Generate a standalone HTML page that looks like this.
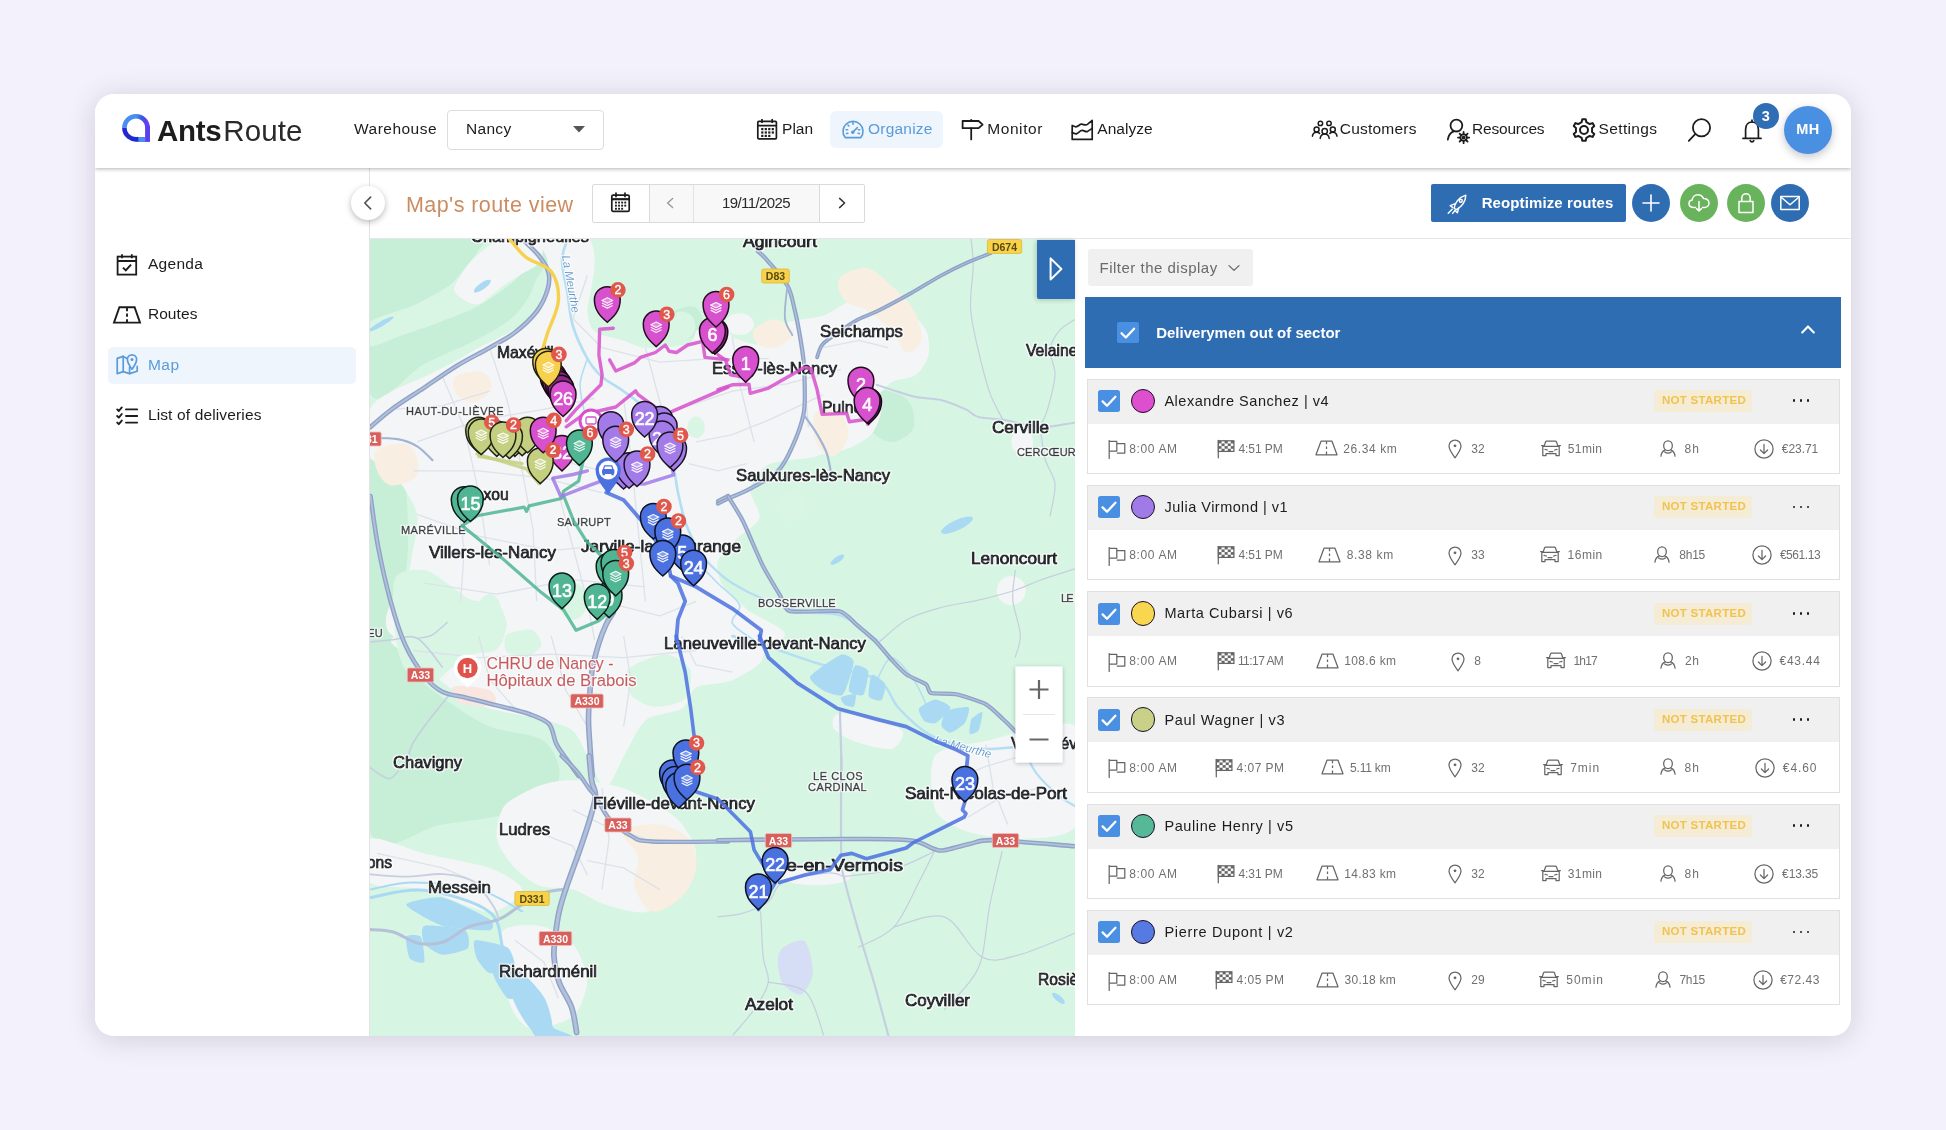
<!DOCTYPE html>
<html lang="en"><head><meta charset="utf-8"><title>AntsRoute - Map's route view</title>
<style>
*{box-sizing:border-box;margin:0;padding:0}
html,body{width:1946px;height:1130px;overflow:hidden}
body{background:#f3f1fb;font-family:"Liberation Sans",sans-serif;color:#1e1e1e;position:relative}
#card{position:absolute;left:95px;top:94px;width:1756px;height:942px;background:#fff;border-radius:19px;box-shadow:0 3px 28px rgba(60,55,85,.19);overflow:hidden}
#w{position:absolute;left:-95px;top:-94px;width:1946px;height:1130px;will-change:transform}
#w div,#w span{position:absolute}
#hdr{left:95px;top:94px;width:1756px;height:74px;background:#fff;box-shadow:0 1px 4px rgba(0,0,0,.3);z-index:5}
.t{white-space:nowrap;line-height:1}
.nav{font-size:15.5px;color:#1e1e1e}
svg{position:absolute;overflow:visible}
#side{left:95px;top:168px;width:275px;height:868px;border-right:1px solid #e3e3e3;background:#fff}
#toolbar{left:370px;top:168px;width:1481px;height:71px;border-bottom:1px solid #e6e6e6;background:#fff}
#map{left:370px;top:239px;width:705px;height:797px;overflow:hidden;background:#d6f5e2}
#panel{left:1075px;top:239px;width:776px;height:797px;background:#fff}
.drv{left:1087px;width:753px;height:96px;border:1px solid #e2e2e2;background:#fff}
.drvtop{left:1088px;width:751px;height:44px;background:#f0f0f0}
.cb{width:22px;height:22px;border-radius:2.5px;background:#4a90e2}
.dot{width:25px;height:25px;border-radius:50%;border:1.6px solid #1a1020}
.name{font-size:15.5px;color:#1e1e1e}
.ns{font-size:11.5px;font-weight:bold;color:#f3c04a}
.nsb{background:#f7ecd2;border-radius:3px}
.st{font-size:13px;color:#777}
.d3{width:3.4px;height:3.4px;border-radius:50%;background:#222}
</style></head><body>
<div id="card"><div id="w">
<div id="hdr"></div>
<div style="left:0;top:0;width:1946px;height:1130px;z-index:6">
<svg style="left:120px;top:112px" width="32" height="32" viewBox="0 0 32 32" ><defs><linearGradient id="lg1" x1="0" y1="0" x2="1" y2="0"><stop offset="0" stop-color="#4a8ff0"/><stop offset=".55" stop-color="#3b55e6"/><stop offset="1" stop-color="#6a3df0"/></linearGradient><linearGradient id="lg2" x1="0" y1="0" x2="1" y2="1"><stop offset="0" stop-color="#3a5ce8"/><stop offset="1" stop-color="#1c22cc"/></linearGradient></defs>
<path d="M16 4.2A11.6 11.6 0 0 1 27.6 15.8V27.4H16" fill="none" stroke="url(#lg1)" stroke-width="4.6"/>
<path d="M4.4 15.8A11.6 11.6 0 0 1 16 4.2" fill="none" stroke="#4a8ff0" stroke-width="4.6"/>
<path d="M4.4 15.8A11.6 11.6 0 0 0 18.5 27.1" fill="none" stroke="#2128d2" stroke-width="4.6"/>
<path d="M18.5 27.4H29.9" fill="none" stroke="#4d8df2" stroke-width="4.6"/>
<path d="M27.6 14V29.7" fill="none" stroke="#5a3ff0" stroke-width="4.6"/></svg>
<span class="t" style="left:157.0px;top:116.2px;font-size:29.5px;color:#1d1d1d;letter-spacing:-0.26px;font-weight:bold;">Ants</span>
<span class="t" style="left:223.3px;top:116.2px;font-size:29.5px;color:#2a2a2a;letter-spacing:0.10px;">Route</span>
<span class="t" style="left:354.0px;top:121.1px;font-size:15.5px;color:#1c1c1c;letter-spacing:0.48px;">Warehouse</span>
<div style="left:447px;top:109.5px;width:157px;height:40.5px;border:1px solid #dcdcdc;border-radius:4px;background:#fff"></div>
<span class="t" style="left:466.0px;top:121.1px;font-size:15.5px;color:#1c1c1c;letter-spacing:0.31px;">Nancy</span>
<svg style="left:572px;top:125px" width="14" height="8" viewBox="0 0 14 8" ><path d="M1 1H13L7 7.4Z" fill="#555"/></svg>
<svg style="left:756px;top:118px" width="22" height="22" viewBox="0 0 22 22" ><g fill="none" stroke="#1c1c1c" stroke-width="1.7"><rect x="1.8" y="3.4" width="18.6" height="17.4" rx="1"/><path d="M1.8 7.6H20.4M6 1V5M16.2 1V5"/></g>
<g fill="#1c1c1c"><rect x="5.2" y="10" width="2.2" height="2.2"/><rect x="8.7" y="10" width="2.2" height="2.2"/><rect x="12.2" y="10" width="2.2" height="2.2"/><rect x="15.7" y="10" width="2.2" height="2.2"/><rect x="5.2" y="13.4" width="2.2" height="2.2"/><rect x="8.7" y="13.4" width="2.2" height="2.2"/><rect x="12.2" y="13.4" width="2.2" height="2.2"/><rect x="15.7" y="13.4" width="2.2" height="2.2"/><rect x="5.2" y="16.8" width="2.2" height="2.2"/><rect x="8.7" y="16.8" width="2.2" height="2.2"/><rect x="12.2" y="16.8" width="2.2" height="2.2"/></g></svg>
<span class="t" style="left:782.0px;top:121.2px;font-size:15.5px;color:#1c1c1c;letter-spacing:0.04px;">Plan</span>
<div style="left:829.5px;top:110.5px;width:113px;height:37.5px;background:#eef5fd;border-radius:6px"></div>
<svg style="left:842px;top:119px" width="22" height="20" viewBox="0 0 22 20" ><g fill="none" stroke="#5a9bdc" stroke-width="1.6" stroke-linecap="round"><path d="M3.2 18.6A10 10 0 1 1 18.8 18.6Z" stroke-linejoin="round"/><path d="M11 13L15.4 8.6"/><path d="M11 3.8V5.2M4.2 10.8H5.6M16.4 10.8H17.8M5.9 6L6.9 7M4.6 14.6L5.8 14.2M17.4 14.6L16.2 14.2"/></g><circle cx="10.8" cy="13.2" r="1.7" fill="#5a9bdc"/></svg>
<span class="t" style="left:868.0px;top:121.2px;font-size:15.5px;color:#5a9bdc;letter-spacing:0.21px;">Organize</span>
<svg style="left:961px;top:118px" width="23" height="22" viewBox="0 0 23 22" ><g fill="none" stroke="#1c1c1c" stroke-width="1.8" stroke-linejoin="round"><path d="M1.6 3H17.6L21.6 6.6L17.6 10.2H1.6Z"/><path d="M10.2 10.2V21.4" stroke-linecap="round"/><path d="M10.2 1.2V3"/></g></svg>
<span class="t" style="left:987.2px;top:121.2px;font-size:15.5px;color:#1c1c1c;letter-spacing:0.59px;">Monitor</span>
<svg style="left:1070px;top:118px" width="24" height="23" viewBox="0 0 24 23" ><g fill="none" stroke="#1c1c1c" stroke-width="1.7" stroke-linejoin="round" stroke-linecap="round"><path d="M2.2 7.4V21.4H22.2V2.4L17.4 6.4C15.4 7.9 13.6 6.2 11.6 6.2C9.4 6.2 8.2 8.8 6 8.8C4.6 8.8 3.4 8 2.2 7.4Z"/><path d="M2.2 14.6C4 15.6 5.4 16.2 6.8 15.6C9 14.6 10 12.2 12.4 12.4C14.6 12.6 15.6 14.4 17.6 13.4L22.2 10.4"/></g></svg>
<span class="t" style="left:1097.3px;top:121.2px;font-size:15.5px;color:#1c1c1c;letter-spacing:0.02px;">Analyze</span>
<svg style="left:1311px;top:119px" width="28" height="21" viewBox="0 0 28 21" ><g fill="none" stroke="#1c1c1c" stroke-width="1.5" stroke-linecap="round"><circle cx="9.4" cy="4.4" r="2.2"/><circle cx="18" cy="4.4" r="2.2"/><circle cx="5.6" cy="10.6" r="2.5"/><circle cx="13.7" cy="12.2" r="2.7"/><circle cx="21.8" cy="10.6" r="2.5"/><path d="M1.4 17.2C1.8 14.6 3.4 13.2 5.6 13.2C6.8 13.2 7.8 13.6 8.6 14.4"/><path d="M26 17.2C25.6 14.6 24 13.2 21.8 13.2C20.6 13.2 19.6 13.6 18.8 14.4"/><path d="M9.2 19.4C9.6 16.6 11.3 15 13.7 15C16.1 15 17.8 16.6 18.2 19.4"/></g></svg>
<span class="t" style="left:1339.8px;top:120.6px;font-size:15.5px;color:#1c1c1c;letter-spacing:0.21px;">Customers</span>
<svg style="left:1446px;top:118px" width="27" height="28" viewBox="0 0 27 28" ><g fill="none" stroke="#1c1c1c" stroke-width="1.800" stroke-linecap="round"><circle cx="10.400" cy="7.600" r="5.900"/><path d="M1.800 21.600C2.400 17.400 4.600 14.600 7.800 13.400"/><circle cx="17.6" cy="19.6" r="3.2"/><circle cx="17.6" cy="19.6" r="1" /><path d="M17.6 14V16.2M17.6 23V25.2M12 19.6H14.2M21 19.6H23.2M13.6 15.6L15.2 17.2M20 22L21.6 23.6M21.6 15.6L20 17.2M15.2 22L13.6 23.6"/></g></svg>
<span class="t" style="left:1472.0px;top:120.6px;font-size:15.5px;color:#1c1c1c;letter-spacing:-0.19px;">Resources</span>
<svg style="left:1571.8px;top:117.5px" width="24" height="24" viewBox="0 0 24 24" ><g fill="none" stroke="#1c1c1c" stroke-width="2" stroke-linejoin="round"><path d="M10.28 1.14L13.72 1.14L14.32 4.03L17.74 6.01L20.55 5.08L22.27 8.06L20.06 10.02L20.06 13.98L22.27 15.94L20.55 18.92L17.74 17.99L14.32 19.97L13.72 22.86L10.28 22.86L9.68 19.97L6.26 17.99L3.45 18.92L1.73 15.94L3.94 13.98L3.94 10.02L1.73 8.06L3.45 5.08L6.26 6.01L9.68 4.03Z"/><circle cx="12" cy="12" r="4"/></g></svg>
<span class="t" style="left:1598.5px;top:120.6px;font-size:15.5px;color:#1c1c1c;letter-spacing:0.37px;">Settings</span>
<svg style="left:1686px;top:116px" width="28" height="28" viewBox="0 0 28 28" ><g fill="none" stroke="#1c1c1c" stroke-width="1.8" stroke-linecap="round"><circle cx="15.5" cy="11.8" r="8.6"/><path d="M9.2 18.2L2.8 24.8"/></g></svg>
<svg style="left:1741px;top:118px" width="22" height="26" viewBox="0 0 22 26" ><g fill="none" stroke="#1c1c1c" stroke-width="1.7" stroke-linecap="round" stroke-linejoin="round"><path d="M2 20.4H20M4.6 20.4V11.4C4.6 6.8 7.2 4 11 4C14.8 4 17.4 6.8 17.4 11.4V20.4"/><path d="M11 4V2.2"/><path d="M9.2 22.6A1.9 1.9 0 0 0 12.8 22.6"/></g></svg>
<div style="left:1753.3px;top:103.3px;width:26px;height:26px;border-radius:50%;background:#2f6db5"></div>
<span class="t" style="left:1761.8px;top:109.0px;font-size:14.5px;color:#fff;font-weight:bold;">3</span>
<div style="left:1784px;top:105.7px;width:48px;height:48px;border-radius:50%;background:#4a90e2;box-shadow:0 3px 9px rgba(60,60,90,.3)"></div>
<span class="t" style="left:1796.3px;top:122.4px;font-size:14.5px;color:#fff;letter-spacing:0.47px;font-weight:bold;">MH</span>
</div>
<div id="side"></div>
<svg style="left:115px;top:253px" width="24" height="24" viewBox="0 0 24 24" ><g fill="none" stroke="#1c1c1c" stroke-width="1.8"><rect x="2.6" y="3.6" width="18.6" height="18" /><path d="M2.6 8H21.2M7 1.2V5.2M16.8 1.2V5.2"/><path d="M8 14.6L10.8 17.4L16 11.6" stroke-width="2"/></g></svg>
<span class="t" style="left:147.9px;top:256.2px;font-size:15.5px;color:#1c1c1c;letter-spacing:0.31px;">Agenda</span>
<svg style="left:112px;top:305px" width="30" height="20" viewBox="0 0 30 20" ><g fill="none" stroke="#1c1c1c" stroke-width="1.9" stroke-linejoin="miter"><path d="M7.4 2.2H22.6L28 17.6H2Z"/><path d="M15 2.2V6.2M15 8.6V11.8M15 14.2V17.6"/></g></svg>
<span class="t" style="left:147.9px;top:306.4px;font-size:15.5px;color:#1c1c1c;letter-spacing:0.08px;">Routes</span>
<div style="left:107.5px;top:346.7px;width:248.7px;height:37.2px;background:#eef5fd;border-radius:5px"></div>
<svg style="left:115px;top:352px" width="25" height="24" viewBox="0 0 25 24" ><g fill="none" stroke="#5a9bdc" stroke-width="1.7" stroke-linejoin="round" stroke-linecap="round"><path d="M8.2 4.4L2.2 6.4V21.6L8.2 19.6L14.6 21.6L22.2 19.2V14.4"/><path d="M8.2 4.4V19.6"/><path d="M12 6.4L8.2 4.4"/><path d="M17 17.2C14.4 13.6 12.4 10.6 12.4 7.4A4.6 4.6 0 0 1 21.6 7.400C21.600 10.600 19.600 13.600 17.000 17.200Z"/><path d="M14.6 21.6V15.6"/></g><circle cx="17" cy="7.4" r="1.5" fill="#5a9bdc"/></svg>
<span class="t" style="left:147.9px;top:356.8px;font-size:15.5px;color:#5a9bdc;letter-spacing:0.48px;">Map</span>
<svg style="left:115px;top:405px" width="25" height="22" viewBox="0 0 25 22" ><g fill="none" stroke="#1c1c1c" stroke-width="1.9" stroke-linecap="round" stroke-linejoin="round"><path d="M11 4.4H22.2M11 11H22.2M11 17.600H22.2"/><path d="M2.2 4.4L3.8 6L6.8 2.4M2.2 11L3.8 12.6L6.8 9M2.2 17.6L3.8 19.2L6.8 15.6"/></g></svg>
<span class="t" style="left:147.9px;top:406.6px;font-size:15.5px;color:#1c1c1c;letter-spacing:0.14px;">List of deliveries</span>
<div id="toolbar"></div>
<div style="left:351px;top:186px;width:34px;height:34px;border-radius:50%;background:#fff;box-shadow:0 2px 6px rgba(0,0,0,.28);z-index:4"></div>
<svg style="z-index:4;left:361px;top:195px" width="14" height="16" viewBox="0 0 14 16" ><path d="M9.6 2.2L3.8 8L9.6 13.8" fill="none" stroke="#555" stroke-width="1.7" stroke-linecap="round" stroke-linejoin="round"/></svg>
<span class="t" style="left:406.0px;top:194.9px;font-size:21.5px;color:#cc8b60;letter-spacing:0.43px;">Map's route view</span>
<div style="left:592px;top:183.5px;width:272.5px;height:39px;border:1px solid #dadada;border-radius:2px;background:#fff"></div>
<div style="left:649px;top:184.5px;width:170.5px;height:37px;background:#f8f8f8;border-left:1px solid #dadada;border-right:1px solid #dadada"></div>
<div style="left:692.5px;top:184.5px;width:1px;height:37px;background:#e2e2e2"></div>
<svg style="left:610px;top:192px" width="21" height="21" viewBox="0 0 21 21" ><g fill="none" stroke="#1c1c1c" stroke-width="1.7"><rect x="1.8" y="3.2" width="17.4" height="16.2" rx="1.4"/><path d="M1.8 7.2H19.2" stroke-width="2.2"/><path d="M6 1V4.600M15 1V4.600" stroke-linecap="round"/></g><g fill="#1c1c1c"><rect x="5" y="9.6" width="1.9" height="1.9"/><rect x="8.1" y="9.6" width="1.9" height="1.9"/><rect x="11.2" y="9.6" width="1.9" height="1.9"/><rect x="14.300" y="9.6" width="1.9" height="1.9"/><rect x="5" y="12.7" width="1.9" height="1.9"/><rect x="8.1" y="12.7" width="1.9" height="1.9"/><rect x="11.2" y="12.7" width="1.9" height="1.9"/><rect x="14.3" y="12.7" width="1.9" height="1.9"/><rect x="5" y="15.8" width="1.9" height="1.9"/><rect x="8.1" y="15.8" width="1.9" height="1.9"/><rect x="11.2" y="15.8" width="1.9" height="1.9"/></g></svg>
<svg style="left:664px;top:196px" width="12" height="14" viewBox="0 0 12 14" ><path d="M8.6 2.4L3.6 7L8.6 11.6" fill="none" stroke="#999" stroke-width="1.4" stroke-linecap="round" stroke-linejoin="round"/></svg>
<span class="t" style="left:722.0px;top:195.2px;font-size:15px;color:#2a2a2a;letter-spacing:-0.60px;">19/11/2025</span>
<svg style="left:836px;top:196px" width="12" height="14" viewBox="0 0 12 14" ><path d="M3.6 2.400L8.6 7L3.6 11.6" fill="none" stroke="#333" stroke-width="1.5" stroke-linecap="round" stroke-linejoin="round"/></svg>
<div style="left:1431px;top:184px;width:195px;height:38px;background:#2f6db3;border-radius:2px"></div>
<svg style="left:1446px;top:193px" width="22" height="22" viewBox="0 0 22 22" ><g fill="none" stroke="#fff" stroke-width="1.4" stroke-linejoin="round" stroke-linecap="round"><path d="M8.2 15.4C8.6 10.4 12.4 4.4 19.8 2.2C19.6 8.6 15.2 13.8 10.6 16.600Z"/><path d="M9.4 10.6L4.2 12.6L6.8 14.6"/><path d="M12.6 15.2L11.4 19.8L8.8 17.2"/><path d="M6.2 16.2L2.2 20.2M8.6 18L6.6 20.4"/><circle cx="14.800" cy="7.800" r="1.5"/></g></svg>
<span class="t" style="left:1481.7px;top:195.0px;font-size:15px;color:#fff;letter-spacing:0.10px;font-weight:bold;">Reoptimize routes</span>
<div style="left:1632.4px;top:184px;width:38px;height:38px;background:#2f6db3;border-radius:50%"></div>
<div style="left:1679.6px;top:184px;width:38px;height:38px;background:#6ab35d;border-radius:50%"></div>
<div style="left:1726.6px;top:184px;width:38px;height:38px;background:#6ab35d;border-radius:50%"></div>
<div style="left:1771.2px;top:184px;width:38px;height:38px;background:#2f6db3;border-radius:50%"></div>
<svg style="left:1641.4px;top:193px" width="20" height="20" viewBox="0 0 20 20" ><path d="M10 2V18M2 10H18" stroke="#fff" stroke-width="1.6" fill="none" stroke-linecap="round"/></svg>
<svg style="left:1686.6px;top:191px" width="24" height="24" viewBox="0 0 24 24" ><g fill="none" stroke="#fff" stroke-width="1.5" stroke-linecap="round" stroke-linejoin="round"><path d="M8.4 16.4H6.400C3.800 16.400 2 14.800 2 12.600C2 10.600 3.400 9.200 5.200 9C5.400 6 7.800 3.800 10.800 3.800C13.400 3.800 15.400 5.200 16.400 7.400C19.400 7.200 22 9.200 22 12C22 14.600 20 16.400 17.600 16.400H15.600"/><path d="M12 10.400V19.800M9.600 17.600L12 20L14.400 17.600"/></g></svg>
<svg style="left:1735.6px;top:191px" width="20" height="24" viewBox="0 0 20 24" ><g fill="none" stroke="#fff" stroke-width="1.5" stroke-linejoin="round"><rect x="3" y="10.400" width="14" height="11"/><path d="M5.800 10.400V7A4.200 4.200 0 0 1 14.200 7V10.400"/></g></svg>
<svg style="left:1779.2px;top:195px" width="22" height="16" viewBox="0 0 22 16" ><g fill="none" stroke="#fff" stroke-width="1.5" stroke-linejoin="round"><rect x="1.800" y="1.600" width="18.400" height="12.800"/><path d="M2.200 2.200L11 9.800L19.800 2.200"/></g></svg>
<div id="map"><svg style="left:0;top:0" width="705" height="797" viewBox="370 239 705 797" font-family="Liberation Sans, sans-serif"><defs><filter id="halo" x="-2%" y="-2%" width="104%" height="104%"><feMorphology in="SourceAlpha" operator="dilate" radius="1.200" result="d"/><feGaussianBlur in="d" stdDeviation=".500" result="b"/><feFlood flood-color="#fff" flood-opacity=".850"/><feComposite in2="b" operator="in" result="h"/><feMerge><feMergeNode in="h"/><feMergeNode in="SourceGraphic"/></feMerge></filter><filter id="zs" x="-20%" y="-10%" width="140%" height="125%"><feDropShadow dx="0" dy="1" stdDeviation="2" flood-color="#000" flood-opacity=".25"/></filter></defs><path d="M370.0 239.0C398.4 213.3 512.8 231.8 540.3 239.0C567.8 246.2 539.1 269.8 534.9 282.5C530.6 295.2 524.3 305.7 514.9 315.1C505.6 324.4 493.8 330.5 478.7 338.6C463.6 346.8 442.5 354.9 424.3 364.0C406.2 373.1 379.1 413.8 370.0 393.0C360.9 372.2 341.6 264.7 370.0 239.0Z" fill="#c7eed6" stroke="none" stroke-width="1" />
<path d="M370.0 461.8C375.1 433.6 394.5 459.7 400.8 470.9C407.1 482.1 407.4 510.1 408.0 528.9C408.6 547.6 407.1 564.7 404.4 583.2C401.7 601.7 397.5 630.6 391.7 640.1C386.0 649.6 373.6 669.8 370.0 640.1C366.4 610.4 364.9 490.0 370.0 461.8Z" fill="#c7eed6" stroke="none" stroke-width="1" />
<path d="M370.0 636.0C373.6 603.4 384.5 630.0 391.7 636.0C399.0 642.0 405.0 662.0 413.5 672.2C421.9 682.5 429.8 688.5 442.5 697.6C455.1 706.7 472.7 719.3 489.6 726.6C506.5 733.8 532.4 732.0 543.9 741.1C555.4 750.1 562.0 769.5 558.4 780.9C554.8 792.4 541.5 802.7 522.2 809.9C502.9 817.2 467.8 820.8 442.5 824.4C417.1 828.0 382.1 863.1 370.0 831.7C357.9 800.3 366.4 668.6 370.0 636.0Z" fill="#c7eed6" stroke="none" stroke-width="1" />
<path d="M870.0 391.2C876.0 386.3 899.0 392.4 906.2 398.4C913.5 404.5 915.9 420.2 913.5 427.4C911.1 434.7 899.0 441.9 891.7 441.9C884.5 441.9 873.6 435.9 870.0 427.4C866.4 419.0 864.0 396.0 870.0 391.2Z" fill="#c7eed6" stroke="none" stroke-width="1" />
<path d="M674.3 311.5C678.6 307.8 691.3 304.8 696.1 307.8C700.9 310.9 705.7 324.1 703.3 329.6C700.9 335.0 687.0 340.4 681.6 340.4C676.2 340.4 671.9 334.4 670.7 329.6C669.5 324.7 670.1 315.1 674.3 311.5Z" fill="#c7eed6" stroke="none" stroke-width="1" />
<path d="M370.0 322.0C375.6 316.7 401.3 310.9 412.0 306.0C422.7 301.1 442.3 290.9 450.0 285.0C457.7 279.1 464.7 268.0 470.0 262.0C475.3 256.0 482.0 242.9 490.0 240.0C498.0 237.1 526.0 235.3 530.0 240.0C534.0 244.7 526.7 266.3 520.0 275.0C513.3 283.7 490.7 298.7 480.0 305.0C469.3 311.3 450.7 317.9 440.0 322.0C429.3 326.1 409.3 332.8 400.0 336.0C390.7 339.2 374.0 347.9 370.0 346.0C366.0 344.1 364.4 327.3 370.0 322.0Z" fill="#d9f6e4" stroke="none" stroke-width="1" />
<path d="M454.0 290.0C453.6 285.1 462.9 271.5 467.0 266.0C471.1 260.5 480.2 252.6 485.0 249.0C489.8 245.4 495.7 240.3 503.0 239.0C510.3 237.7 535.1 235.9 540.0 239.0C544.9 242.1 542.7 257.2 540.0 262.0C537.3 266.8 524.9 271.8 520.0 275.0C515.1 278.2 508.2 282.3 503.0 286.0C497.8 289.7 485.4 300.7 481.0 303.0C476.6 305.3 473.6 304.7 470.0 303.0C466.4 301.3 454.4 294.9 454.0 290.0Z" fill="#f3f5f6" stroke="none" stroke-width="1" />
<path d="M370.0 409.3C372.9 400.6 384.5 395.5 391.7 391.2C399.0 386.8 416.1 380.5 424.3 376.7C432.6 372.8 446.1 366.1 453.3 362.2C460.6 358.3 471.4 351.6 478.7 347.7C485.9 343.8 500.9 337.1 507.7 333.2C514.4 329.3 524.6 324.0 529.4 318.7C534.3 313.4 541.5 301.1 543.9 293.3C546.3 285.6 548.0 268.0 547.5 260.7C547.1 253.5 535.0 241.9 540.3 239.0C545.6 236.1 580.1 236.1 587.4 239.0C594.6 241.9 594.1 254.5 594.6 260.7C595.2 267.0 592.7 279.3 591.7 286.1C590.8 292.9 587.0 305.4 587.4 311.5C587.8 317.5 589.8 327.5 594.6 331.4C599.5 335.3 616.9 338.3 623.6 340.4C630.4 342.6 636.7 347.2 645.4 347.7C654.1 348.2 681.8 346.5 688.8 344.1C695.8 341.7 692.8 332.4 697.9 329.6C703.0 326.8 722.3 322.1 726.9 323.1C731.5 324.0 727.7 334.0 732.3 336.8C736.9 339.6 754.1 345.9 761.3 344.1C768.6 342.2 778.5 326.8 786.7 323.1C794.9 319.3 814.2 318.7 822.9 315.8C831.6 312.9 843.7 302.4 851.9 301.3C860.1 300.3 878.1 304.1 884.5 307.8C890.9 311.6 898.7 322.8 899.7 329.6C900.7 336.3 894.7 351.3 891.7 358.6C888.7 365.8 882.6 379.1 877.2 383.9C871.9 388.8 857.1 390.9 851.9 394.8C846.7 398.7 840.0 406.6 838.1 412.9C836.2 419.2 840.4 436.1 837.4 441.9C834.4 447.7 824.8 453.4 815.7 456.4C806.5 459.4 777.2 460.0 768.6 464.4C759.9 468.7 751.6 481.9 750.4 489.0C749.2 496.1 761.4 511.2 759.5 518.0C757.6 524.7 741.5 533.9 735.9 539.7C730.4 545.5 719.5 555.2 717.8 561.5C716.1 567.7 719.4 580.4 723.3 586.8C727.1 593.2 740.8 602.0 746.8 609.3C752.9 616.5 814.0 636.9 768.6 641.2C723.1 645.4 454.0 651.3 406.2 641.2C358.5 631.0 409.1 582.0 410.6 565.1C412.0 548.2 419.6 526.9 417.1 514.4C414.6 501.8 398.0 478.6 391.7 470.9C385.5 463.2 372.9 464.6 370.0 456.4C367.1 448.2 367.1 418.0 370.0 409.3Z" fill="#f3f5f6" stroke="none" stroke-width="1" />
<path d="M406.2 634.2C447.3 630.1 684.7 631.0 732.3 634.2C779.9 637.3 763.1 651.6 763.1 657.7C763.1 663.9 741.3 676.2 732.3 680.2C723.4 684.2 702.8 683.7 696.1 687.4C689.4 691.2 689.0 704.1 682.3 708.5C675.7 712.8 653.8 713.8 646.1 720.1C638.4 726.3 629.8 746.5 624.3 755.6C618.9 764.6 610.4 788.2 605.5 788.2C600.6 788.2 591.7 763.2 587.4 755.6C583.0 747.9 578.7 735.7 572.9 730.9C567.1 726.2 555.0 723.1 543.9 720.1C532.8 717.1 501.6 712.4 489.6 708.5C477.5 704.5 462.0 696.1 453.3 690.3C444.6 684.6 430.6 672.5 424.3 665.0C418.1 657.5 365.2 638.3 406.2 634.2Z" fill="#f3f5f6" stroke="none" stroke-width="1" />
<path d="M587.4 780.9C596.1 781.9 614.0 784.8 623.6 788.2C633.3 791.6 652.0 801.5 659.9 806.3C667.7 811.1 677.5 818.1 682.3 824.4C687.1 830.7 696.1 844.7 696.1 853.4C696.1 862.1 689.0 881.8 682.3 889.6C675.7 897.4 656.3 910.1 646.1 912.1C635.8 914.1 615.3 907.8 605.5 904.8C595.7 901.8 581.6 892.1 572.9 889.6C564.2 887.1 548.0 888.9 540.3 886.0C532.6 883.1 520.7 874.2 514.9 867.9C509.1 861.6 498.3 847.1 496.8 838.9C495.4 830.7 499.2 813.1 504.1 806.3C508.9 799.5 525.8 791.6 533.0 788.2C540.3 784.8 551.2 781.9 558.4 780.9C565.7 780.0 578.7 780.0 587.4 780.9Z" fill="#f3f5f6" stroke="none" stroke-width="1" />
<path d="M370.0 838.9C377.2 835.0 408.4 849.5 424.3 853.4C440.3 857.3 476.5 863.1 489.6 867.9C502.6 872.7 522.2 883.7 522.2 889.6C522.2 895.5 502.6 912.1 489.6 912.1C476.5 912.1 440.3 893.6 424.3 889.6C408.4 885.7 377.2 889.1 370.0 882.4C362.8 875.6 362.8 842.8 370.0 838.9Z" fill="#f3f5f6" stroke="none" stroke-width="1" />
<path d="M501.2 933.1C505.5 923.4 530.7 924.4 540.3 925.9C549.9 927.3 566.6 936.7 572.9 944.0C579.2 951.2 587.4 970.5 587.4 980.2C587.4 989.9 580.6 1010.1 572.9 1016.4C565.2 1022.8 538.1 1030.4 529.4 1028.0C520.7 1025.6 511.4 1011.0 507.7 998.3C503.9 985.7 496.8 942.8 501.2 933.1Z" fill="#f3f5f6" stroke="none" stroke-width="1" />
<path d="M935.2 755.6C942.0 746.4 967.1 744.9 985.9 741.1C1004.8 737.2 1064.4 715.5 1076.5 726.6C1088.6 737.7 1083.8 809.4 1076.5 824.4C1069.3 839.4 1036.7 837.9 1022.2 838.9C1007.7 839.9 979.4 835.5 967.8 831.7C956.2 827.8 939.6 820.1 935.2 809.9C930.9 799.8 928.5 764.7 935.2 755.6Z" fill="#f3f5f6" stroke="none" stroke-width="1" />
<path d="M837.4 713.9C842.2 712.4 861.3 715.3 870.0 717.5C878.7 719.8 899.7 726.7 902.6 730.9C905.5 735.1 898.0 747.6 891.7 749.0C885.5 750.5 863.2 744.6 855.5 741.8C847.8 739.0 836.2 732.1 833.8 728.4C831.4 724.7 832.6 715.3 837.4 713.9Z" fill="#f3f5f6" stroke="none" stroke-width="1" />
<ellipse cx="815.7" cy="875.9" rx="36.2" ry="9.4" fill="#f3f5f6"/>
<ellipse cx="1011.3" cy="590.4" rx="14.5" ry="14.5" fill="#f3f5f6"/>
<ellipse cx="1022.2" cy="441.9" rx="10.9" ry="13.0" fill="#f3f5f6"/>
<ellipse cx="739.6" cy="324.1" rx="14.5" ry="10.9" fill="#f3f5f6"/>
<ellipse cx="623.6" cy="441.9" rx="14.5" ry="10.9" fill="#f3f5f6"/>
<path d="M846.8 317.8C852.1 313.1 868.6 306.4 876.6 305.4C884.5 304.4 899.7 307.0 906.3 310.3C912.9 313.6 923.2 324.2 926.1 330.2C929.1 336.1 929.9 349.0 928.6 354.9C927.3 360.9 921.2 371.1 916.2 374.8C911.3 378.4 896.7 379.5 891.4 382.2C886.2 384.8 881.2 394.2 876.6 394.6C871.9 394.9 861.4 388.6 856.8 384.7C852.1 380.7 844.5 370.8 841.9 364.8C839.2 358.9 836.3 346.3 836.9 340.1C837.6 333.8 841.6 322.4 846.8 317.8Z" fill="#f3f5f6" stroke="none" stroke-width="1" />
<path d="M807.2 374.8C813.5 370.8 837.6 368.5 846.8 369.8C856.1 371.1 871.9 379.4 876.6 384.7C881.2 389.9 882.2 402.8 881.5 409.4C880.9 416.0 876.2 428.9 871.6 434.2C867.0 439.5 854.1 446.4 846.8 449.1C839.6 451.7 823.1 456.0 817.1 454.0C811.2 452.1 804.6 441.5 802.2 434.2C799.9 426.9 799.1 407.5 799.8 399.5C800.4 391.6 800.9 378.7 807.2 374.8Z" fill="#f3f5f6" stroke="none" stroke-width="1" />
<ellipse cx="681.6" cy="326.0" rx="13.8" ry="14.5" fill="#d9f6e4"/>
<ellipse cx="790.3" cy="507.1" rx="14.5" ry="14.5" fill="#d9f6e4"/>
<ellipse cx="572.9" cy="601.3" rx="14.5" ry="18.1" fill="#d9f6e4"/>
<ellipse cx="489.6" cy="608.6" rx="10.9" ry="14.5" fill="#d9f6e4"/>
<ellipse cx="696.1" cy="427.4" rx="8.7" ry="10.9" fill="#d9f6e4"/>
<path d="M395.3 577.8C399.2 569.2 417.7 569.3 425.0 570.3C432.3 571.3 443.5 581.2 449.8 585.2C456.0 589.2 465.8 597.8 472.1 600.1C478.3 602.4 492.2 599.2 496.8 602.5C501.5 605.8 506.8 618.6 506.8 624.8C506.8 631.1 501.5 645.7 496.8 649.6C492.2 653.6 478.3 651.9 472.1 654.6C465.8 657.2 455.4 665.5 449.8 669.4C444.1 673.4 435.9 684.3 429.9 684.3C424.0 684.3 409.8 676.0 405.2 669.4C400.5 662.8 396.6 647.0 395.3 634.8C393.9 622.5 391.3 586.4 395.3 577.8Z" fill="#d9f6e4" stroke="none" stroke-width="1" />
<path d="M506.8 634.8C510.1 631.8 526.9 628.5 531.5 629.8C536.2 631.1 542.1 641.0 541.4 644.7C540.8 648.3 531.2 656.1 526.6 657.1C521.9 658.0 509.4 655.1 506.8 652.1C504.1 649.1 503.4 637.7 506.8 634.8Z" fill="#d9f6e4" stroke="none" stroke-width="1" />
<path d="M628.2 669.4C632.8 664.2 657.1 654.6 665.3 654.6C673.6 654.6 687.5 663.5 690.1 669.4C692.7 675.4 690.1 694.2 685.1 699.2C680.2 704.1 660.2 707.3 652.9 706.6C645.7 705.9 633.9 699.2 630.6 694.2C627.3 689.3 623.5 674.7 628.2 669.4Z" fill="#d9f6e4" stroke="none" stroke-width="1" />
<path d="M839.4 278.1C843.1 272.8 858.0 267.0 866.7 268.2C875.3 269.4 883.6 278.5 891.4 285.6C899.3 292.6 908.8 301.2 913.7 310.3C918.7 319.4 922.4 333.0 921.2 340.1C919.9 347.1 911.3 354.1 906.3 352.5C901.3 350.8 898.0 337.2 891.4 330.2C884.8 323.1 874.5 315.3 866.7 310.3C858.8 305.4 848.9 305.8 844.4 300.4C839.8 295.1 835.7 283.5 839.4 278.1Z" fill="#f8efe2" stroke="none" stroke-width="1" />
<path d="M754.1 329.6C757.1 325.5 769.2 318.8 775.8 319.4C782.4 320.0 793.9 328.5 793.9 333.2C793.9 337.9 781.8 345.9 775.8 347.7C769.8 349.5 761.3 347.1 757.7 344.1C754.1 341.1 751.0 333.7 754.1 329.6Z" fill="#f8efe2" stroke="none" stroke-width="1" />
<path d="M815.7 412.9C819.3 407.5 832.0 405.7 837.4 409.3C842.8 412.9 848.9 426.8 848.3 434.7C847.7 442.5 839.2 455.2 833.8 456.4C828.3 457.6 818.7 449.1 815.7 441.9C812.6 434.7 812.0 418.3 815.7 412.9Z" fill="#f8efe2" stroke="none" stroke-width="1" />
<path d="M455.1 376.7C459.4 372.9 476.3 370.2 482.3 372.0C488.4 373.8 492.6 382.5 491.4 387.6C490.2 392.6 480.8 400.8 475.1 402.0C469.3 403.3 460.3 399.0 457.0 394.8C453.6 390.6 450.9 380.5 455.1 376.7Z" fill="#f8efe2" stroke="none" stroke-width="1" />
<path d="M377.2 449.1C382.7 444.9 403.2 441.3 409.9 445.5C416.5 449.7 420.1 467.9 417.1 474.5C414.1 481.1 398.4 486.0 391.7 485.4C385.1 484.8 379.7 476.9 377.2 470.9C374.8 464.8 371.8 453.4 377.2 449.1Z" fill="#f8efe2" stroke="none" stroke-width="1" />
<path d="M623.6 831.7C627.2 826.2 649.0 823.2 659.9 824.4C670.7 825.6 682.8 831.7 688.8 838.9C694.9 846.1 697.3 858.2 696.1 867.9C694.9 877.5 688.8 889.6 681.6 896.9C674.3 904.1 660.5 913.2 652.6 911.4C644.8 909.6 636.9 895.1 634.5 886.0C632.1 876.9 639.9 866.1 638.1 857.0C636.3 848.0 620.0 837.1 623.6 831.7Z" fill="#f8efe2" stroke="none" stroke-width="1" />
<path d="M453.3 686.7C458.2 684.6 482.9 687.3 489.6 690.3C496.2 693.4 498.0 702.7 493.2 704.8C488.4 707.0 467.2 706.0 460.6 703.0C453.9 700.0 448.5 688.8 453.3 686.7Z" fill="#f9e6e0" stroke="none" stroke-width="1" />
<path d="M567.5 239.0C566.6 242.6 562.0 251.7 562.0 260.7C562.0 269.8 565.7 282.5 567.5 293.3C569.3 304.2 569.6 315.1 572.9 326.0C576.2 336.8 582.6 350.1 587.4 358.6C592.2 367.0 595.8 371.2 601.9 376.7C607.9 382.1 616.4 385.7 623.6 391.2C630.9 396.6 639.3 402.0 645.4 409.3C651.4 416.5 655.3 425.6 659.9 434.7C664.4 443.7 669.5 454.0 672.5 463.6C675.6 473.3 675.9 483.0 678.0 492.6C680.1 502.3 682.2 512.6 685.2 521.6C688.2 530.7 694.3 542.7 696.1 547.0" fill="none" stroke="#b3def3" stroke-width="2.6" stroke-linecap="round"/>
<path d="M587.4 358.6C586.2 362.8 580.7 375.5 580.1 383.9C579.5 392.4 583.2 405.1 583.8 409.3" fill="none" stroke="#b3def3" stroke-width="1.6" stroke-linecap="round"/>
<path d="M696.1 547.0C698.5 550.0 704.5 559.0 710.6 565.1C716.6 571.1 722.7 577.2 732.3 583.2C742.0 589.2 756.5 596.5 768.6 601.3C780.6 606.1 792.7 609.8 804.8 612.2C816.9 614.6 828.9 611.2 841.0 615.8C853.1 620.5 871.2 636.0 877.2 640.1" fill="none" stroke="#b3def3" stroke-width="2.2" stroke-linecap="round"/>
<path d="M688.8 554.2C693.7 559.0 709.4 574.7 717.8 583.2C726.3 591.7 737.1 598.3 739.6 604.9C742.0 611.6 729.9 617.2 732.3 623.1C734.7 628.9 750.4 637.2 754.1 640.1" fill="none" stroke="#b3def3" stroke-width="1.6" stroke-linecap="round"/>
<path d="M732.3 636.0C738.4 637.8 753.5 642.0 768.6 646.9C783.6 651.7 804.8 659.6 822.9 665.0C841.0 670.4 864.6 672.2 877.2 679.5C889.9 686.7 890.5 699.4 899.0 708.5C907.4 717.5 918.3 727.8 928.0 733.8C937.6 739.9 947.3 742.2 957.0 744.7C966.6 747.2 975.1 748.7 985.9 749.0C996.8 749.3 1007.3 747.5 1022.2 746.5C1037.0 745.5 1066.3 743.8 1075.1 743.2" fill="none" stroke="#b3def3" stroke-width="2.4" stroke-linecap="round"/>
<path d="M877.2 679.5C879.7 675.9 885.7 657.7 891.7 657.7C897.8 657.7 907.4 671.0 913.5 679.5C919.5 687.9 925.6 703.6 928.0 708.5" fill="none" stroke="#b3def3" stroke-width="1.4" stroke-linecap="round"/>
<path d="M1022.2 746.5C1024.6 751.0 1030.6 765.5 1036.7 773.7C1042.7 781.8 1052.0 790.0 1058.4 795.4C1064.8 800.9 1072.3 804.5 1075.1 806.3" fill="none" stroke="#b3def3" stroke-width="2.2" stroke-linecap="round"/>
<ellipse cx="957.0" cy="525.2" rx="17.4" ry="5.1" fill="#a9d9f3" transform="rotate(-25 957.0 525.2)"/>
<ellipse cx="837.4" cy="559.7" rx="8.0" ry="2.9" fill="#a9d9f3" transform="rotate(-35 837.4 559.7)"/>
<ellipse cx="482.3" cy="286.1" rx="10.1" ry="3.3" fill="#a9d9f3" transform="rotate(-35 482.3 286.1)"/>
<ellipse cx="380.9" cy="324.1" rx="14.5" ry="2.5" fill="#a9d9f3" transform="rotate(-30 380.9 324.1)"/>
<ellipse cx="1058.4" cy="998.3" rx="8.0" ry="2.9" fill="#a9d9f3" transform="rotate(40 1058.4 998.3)"/>
<path d="M810.2 676.6C812.0 673.0 836.7 656.3 841.0 654.8C845.4 653.4 853.5 658.1 853.7 662.1C853.9 666.1 845.9 691.9 842.8 694.7C839.7 697.5 826.2 692.2 822.9 690.3C819.6 688.5 808.4 680.1 810.2 676.6Z" fill="#a9d9f3" stroke="none" stroke-width="1" />
<path d="M854.8 665.7C856.7 663.7 867.3 668.2 868.2 671.1C869.1 674.0 865.4 692.7 863.5 694.7C861.6 696.7 849.9 694.0 849.0 691.1C848.1 688.2 852.9 667.7 854.8 665.7Z" fill="#a9d9f3" stroke="none" stroke-width="1" />
<path d="M871.8 674.8C873.4 673.5 884.2 681.3 885.2 683.8C886.2 686.4 883.2 698.9 881.6 700.1C880.0 701.4 869.9 699.0 868.9 696.5C867.9 694.0 870.2 676.0 871.8 674.8Z" fill="#a9d9f3" stroke="none" stroke-width="1" />
<path d="M841.0 697.6C842.1 696.5 854.2 693.1 855.5 694.0C856.8 694.9 854.8 705.6 853.7 706.7C852.6 707.7 845.9 705.7 844.6 704.8C843.4 703.9 839.9 698.7 841.0 697.6Z" fill="#a9d9f3" stroke="none" stroke-width="1" />
<path d="M918.9 708.5C920.0 706.3 932.1 699.5 935.2 699.4C938.4 699.3 950.4 705.0 950.4 707.4C950.5 709.7 938.6 721.6 935.9 723.0C933.3 724.3 926.1 722.6 924.3 721.1C922.6 719.7 917.8 710.6 918.9 708.5Z" fill="#a9d9f3" stroke="none" stroke-width="1" />
<path d="M946.8 711.0C949.5 709.2 966.7 706.2 968.6 707.4C970.4 708.6 966.7 720.4 964.9 723.0C963.1 725.5 952.8 732.5 950.4 732.7C948.1 733.0 941.7 727.7 941.4 725.5C941.0 723.3 944.1 712.8 946.8 711.0Z" fill="#a9d9f3" stroke="none" stroke-width="1" />
<path d="M971.4 719.3C972.7 717.2 981.6 711.0 982.3 712.1C983.0 713.2 980.0 728.0 978.7 730.2C977.4 732.4 970.4 734.9 969.6 733.8C968.9 732.7 970.2 721.5 971.4 719.3Z" fill="#a9d9f3" stroke="none" stroke-width="1" />
<path d="M370.0 897.6C379.1 896.4 404.4 887.9 424.3 890.3C444.3 892.8 476.2 901.3 489.6 912.1C503.0 922.8 498.6 941.7 504.8 954.8C510.9 968.0 517.6 977.4 526.5 991.1C535.5 1004.8 553.1 1029.4 558.4 1037.1" fill="none" stroke="#a9d9f3" stroke-width="3" stroke-linecap="round"/>
<path d="M370.0 889.6C377.2 888.4 395.4 882.4 413.5 882.4C431.6 882.4 460.6 884.8 478.7 889.6C496.8 894.5 514.9 907.7 522.2 911.4" fill="none" stroke="#a9d9f3" stroke-width="2" stroke-linecap="round"/>
<path d="M406.2 904.8C406.2 902.0 434.1 896.1 442.5 897.6C450.8 899.0 484.9 916.1 489.6 919.3C494.3 922.6 494.3 929.6 489.6 930.2C484.9 930.9 450.8 928.4 442.5 925.9C434.1 923.3 406.2 907.7 406.2 904.8Z" fill="#a9d9f3" stroke="none" stroke-width="1" />
<path d="M424.3 925.9C428.4 924.5 460.6 928.0 464.9 930.2C469.3 932.4 470.1 945.9 467.8 948.3C465.6 950.8 446.8 955.3 442.5 954.8C438.1 954.4 426.2 946.9 424.3 944.0C422.5 941.1 420.3 927.2 424.3 925.9Z" fill="#a9d9f3" stroke="none" stroke-width="1" />
<path d="M475.1 940.3C478.2 939.3 503.7 944.7 507.7 947.6C511.7 950.5 516.7 966.8 514.9 969.3C513.1 971.9 493.4 974.0 489.6 973.0C485.8 971.9 478.3 961.7 476.9 958.5C475.4 955.2 472.0 941.4 475.1 940.3Z" fill="#a9d9f3" stroke="none" stroke-width="1" />
<path d="M406.2 936.7C407.3 934.6 418.9 934.2 420.7 936.7C422.5 939.3 425.4 959.9 424.3 962.1C423.3 964.3 411.7 961.0 409.9 958.5C408.0 955.9 405.1 938.9 406.2 936.7Z" fill="#a9d9f3" stroke="none" stroke-width="1" />
<path d="M493.2 973.0C494.6 970.8 518.6 974.4 522.2 976.6C525.8 978.8 530.9 992.5 529.4 994.7C528.0 996.9 511.3 1000.5 507.7 998.3C504.1 996.1 491.7 975.1 493.2 973.0Z" fill="#a9d9f3" stroke="none" stroke-width="1" />
<path d="M504.8 969.3C505.7 965.0 516.9 969.1 522.2 973.0C527.5 976.8 540.7 991.1 544.6 998.3C548.6 1005.6 553.3 1022.9 551.9 1027.3C550.4 1031.7 538.6 1034.6 533.8 1031.7C528.9 1028.8 519.5 1013.9 515.7 1005.6C511.8 997.3 503.9 973.7 504.8 969.3Z" fill="#a9d9f3" stroke="none" stroke-width="1" />
<path d="M529.4 1016.4C531.4 1015.1 545.4 1024.6 551.2 1027.3C557.0 1030.1 574.8 1035.8 572.9 1037.1C571.0 1038.4 542.5 1039.8 536.7 1037.1C530.9 1034.3 527.5 1017.7 529.4 1016.4Z" fill="#a9d9f3" stroke="none" stroke-width="1" />
<path d="M783.0 947.6C786.7 944.8 800.8 937.7 804.8 941.1C808.7 944.5 813.2 965.8 812.8 973.0C812.3 980.1 805.1 993.2 801.2 994.7C797.2 996.1 786.2 988.2 783.0 983.8C779.9 979.5 777.6 966.9 777.6 962.1C777.6 957.3 779.4 950.4 783.0 947.6Z" fill="#d6def5" stroke="none" stroke-width="1" />
<path d="M417.1 441.9L478.7 420.2L543.9 409.3L594.6 398.4" fill="none" stroke="#dde2ea" stroke-width="1.3" />
<path d="M413.5 470.9L478.7 470.9L543.9 478.1L601.9 492.6" fill="none" stroke="#dde2ea" stroke-width="1.3" />
<path d="M442.5 376.7L464.2 427.4L478.7 492.6L489.6 565.1" fill="none" stroke="#dde2ea" stroke-width="1.3" />
<path d="M489.6 347.7L507.7 402.0L522.2 470.9L533.0 528.9L536.7 601.3" fill="none" stroke="#dde2ea" stroke-width="1.3" />
<path d="M417.1 514.4L478.7 536.1L551.2 550.6L623.6 543.3" fill="none" stroke="#dde2ea" stroke-width="1.3" />
<path d="M424.3 583.2L496.8 594.1L572.9 579.6L645.4 586.8" fill="none" stroke="#dde2ea" stroke-width="1.3" />
<path d="M558.4 492.6L572.9 547.0L587.4 601.3L594.6 640.1" fill="none" stroke="#dde2ea" stroke-width="1.3" />
<path d="M623.6 398.4L630.9 456.4L638.1 528.9L645.4 601.3" fill="none" stroke="#dde2ea" stroke-width="1.3" />
<path d="M601.9 347.7L659.9 362.2L714.2 358.6L768.6 358.6" fill="none" stroke="#dde2ea" stroke-width="1.3" />
<path d="M645.4 347.7L659.9 402.0L674.3 441.9" fill="none" stroke="#dde2ea" stroke-width="1.3" />
<path d="M678.0 409.3L732.3 391.2L786.7 383.9L841.0 369.4" fill="none" stroke="#dde2ea" stroke-width="1.3" />
<path d="M696.1 441.9L732.3 434.7L768.6 420.2L822.9 394.8" fill="none" stroke="#dde2ea" stroke-width="1.3" />
<path d="M732.3 336.8L739.6 383.9L754.1 441.9" fill="none" stroke="#dde2ea" stroke-width="1.3" />
<path d="M797.5 326.0L804.8 383.9L808.4 427.4" fill="none" stroke="#dde2ea" stroke-width="1.3" />
<path d="M822.9 347.7L859.1 340.4L888.1 347.7" fill="none" stroke="#dde2ea" stroke-width="1.3" />
<path d="M587.4 275.2L572.9 318.7L601.9 347.7" fill="none" stroke="#dde2ea" stroke-width="1.3" />
<path d="M688.8 463.6L717.8 470.9L746.8 463.6" fill="none" stroke="#dde2ea" stroke-width="1.3" />
<path d="M601.9 601.3L659.9 615.8L696.1 601.3" fill="none" stroke="#dde2ea" stroke-width="1.3" />
<path d="M551.2 441.9L572.9 463.6L601.9 470.9L623.6 456.4" fill="none" stroke="#dde2ea" stroke-width="1.3" />
<path d="M457.0 492.6L464.2 550.6L460.6 601.3" fill="none" stroke="#dde2ea" stroke-width="1.3" />
<path d="M391.7 409.3L442.5 405.7L489.6 391.2" fill="none" stroke="#dde2ea" stroke-width="1.3" />
<path d="M413.5 650.5L478.7 657.7L551.2 654.1L623.6 657.7L696.1 650.5" fill="none" stroke="#dde2ea" stroke-width="1.3" />
<path d="M478.7 636.0L489.6 679.5L514.9 708.5" fill="none" stroke="#dde2ea" stroke-width="1.3" />
<path d="M551.2 636.0L565.7 690.3L587.4 726.6" fill="none" stroke="#dde2ea" stroke-width="1.3" />
<path d="M623.6 636.0L630.9 679.5L623.6 726.6" fill="none" stroke="#dde2ea" stroke-width="1.3" />
<path d="M681.6 636.0L696.1 665.0L732.3 672.2" fill="none" stroke="#dde2ea" stroke-width="1.3" />
<path d="M572.9 809.9L601.9 824.4L645.4 838.9" fill="none" stroke="#dde2ea" stroke-width="1.3" />
<path d="M587.4 860.6L623.6 867.9L659.9 889.6" fill="none" stroke="#dde2ea" stroke-width="1.3" />
<path d="M601.9 788.2L609.1 838.9L601.9 889.6" fill="none" stroke="#dde2ea" stroke-width="1.3" />
<path d="M536.7 831.7L572.9 846.1L587.4 875.1" fill="none" stroke="#dde2ea" stroke-width="1.3" />
<path d="M949.7 780.9L985.9 766.4L1022.2 755.6L1058.4 744.7" fill="none" stroke="#dde2ea" stroke-width="1.3" />
<path d="M967.8 817.2L1004.1 795.4L1040.3 788.2" fill="none" stroke="#dde2ea" stroke-width="1.3" />
<path d="M985.9 744.7L993.2 788.2L1007.7 824.4" fill="none" stroke="#dde2ea" stroke-width="1.3" />
<path d="M377.2 853.4L442.5 867.9L485.9 886.0" fill="none" stroke="#dde2ea" stroke-width="1.3" />
<path d="M514.9 940.3L543.9 962.1L558.4 998.3" fill="none" stroke="#dde2ea" stroke-width="1.3" />
<path d="M876.6 384.7C879.1 385.5 884.8 387.6 891.4 389.6C898.0 391.7 908.0 395.3 916.2 397.1C924.5 398.8 932.7 398.0 941.0 400.0C949.3 402.1 959.6 406.6 965.8 409.4C972.0 412.2 972.0 415.1 978.2 416.9C984.4 418.6 992.6 418.2 1002.9 419.8C1013.3 421.5 1029.8 426.0 1040.1 426.8C1050.4 427.5 1058.6 425.1 1064.9 424.3C1071.2 423.5 1075.8 422.2 1078.0 421.8" fill="none" stroke="#c6cfe1" stroke-width="2" stroke-linecap="round" stroke-linejoin="round"/>
<path d="M368.0 929.5C372.2 929.9 384.8 929.7 393.1 932.0C401.5 934.3 409.9 941.6 418.3 943.3C426.7 945.0 435.0 944.7 443.4 942.0C451.8 939.3 459.3 930.7 468.6 926.9C477.8 923.2 490.3 922.8 498.7 919.4C507.1 916.0 511.3 911.2 518.8 906.8C526.4 902.4 536.4 895.9 544.0 893.0C551.5 890.1 560.7 889.9 564.1 889.2" fill="none" stroke="#b5c1d9" stroke-width="3" stroke-linecap="round" stroke-linejoin="round"/>
<path d="M368.0 874.1C374.3 874.6 393.1 876.7 405.7 876.7C418.3 876.7 432.1 873.3 443.4 874.1C454.7 875.0 465.2 876.2 473.6 881.7C482.0 887.1 489.5 900.5 493.7 906.8C497.9 913.1 497.9 917.3 498.7 919.4" fill="none" stroke="#c6cfe1" stroke-width="1.8" stroke-linecap="round" stroke-linejoin="round"/>
<path d="M839.9 711.6C840.1 716.9 840.6 733.0 840.9 743.8C841.2 754.5 841.7 770.6 841.9 776.0" fill="none" stroke="#c6cfe1" stroke-width="2.2" stroke-linecap="round" stroke-linejoin="round"/>
<path d="M841.2 756.0C841.2 772.8 840.8 836.4 841.2 856.6C841.6 876.7 840.8 864.1 843.7 876.7C846.6 889.2 853.7 914.4 858.8 932.0C863.8 949.6 868.8 964.6 873.9 982.2C878.9 999.8 886.4 1028.3 888.9 1037.5" fill="none" stroke="#c6cfe1" stroke-width="2.2" stroke-linecap="round" stroke-linejoin="round"/>
<path d="M879.1 642.2C883.6 638.5 896.0 625.7 906.3 619.9C916.6 614.1 929.0 610.8 941.0 607.5C953.0 604.2 965.8 603.0 978.2 600.1C990.5 597.2 1005.0 593.5 1015.3 590.2C1025.6 586.8 1029.7 584.0 1040.1 580.2C1050.5 576.5 1071.7 569.9 1078.0 567.9" fill="none" stroke="#c6cfe1" stroke-width="1.2" stroke-linecap="round" stroke-linejoin="round"/>
<path d="M1015.3 570.3C1014.9 575.3 1012.0 589.3 1012.8 600.1C1013.7 610.8 1019.9 625.3 1020.3 634.8C1020.7 644.2 1016.1 653.3 1015.3 657.1" fill="none" stroke="#c6cfe1" stroke-width="1.2" stroke-linecap="round" stroke-linejoin="round"/>
<path d="M970.7 236.0C971.1 241.0 973.2 253.3 973.2 265.7C973.2 278.1 969.5 294.6 970.7 310.3C972.0 326.0 977.3 345.8 980.6 359.9C983.9 373.9 986.8 384.6 990.5 394.6C994.3 404.6 1000.9 415.6 1002.9 419.8" fill="none" stroke="#c6cfe1" stroke-width="1.2" stroke-linecap="round" stroke-linejoin="round"/>
<path d="M1040.1 426.8C1040.9 432.2 1042.6 449.5 1045.1 459.0C1047.5 468.5 1054.1 474.3 1055.0 483.8C1055.8 493.3 1050.8 510.6 1050.0 516.0" fill="none" stroke="#c6cfe1" stroke-width="1.2" stroke-linecap="round" stroke-linejoin="round"/>
<path d="M1078.0 317.8C1075.0 319.8 1064.6 324.8 1059.9 330.2C1055.3 335.5 1050.8 342.5 1050.0 350.0C1049.2 357.4 1055.4 364.8 1055.0 374.8C1054.6 384.7 1050.0 400.8 1047.5 409.4C1045.1 418.1 1041.3 423.9 1040.1 426.8" fill="none" stroke="#c6cfe1" stroke-width="1.2" stroke-linecap="round" stroke-linejoin="round"/>
<path d="M718.0 916.9C722.2 916.3 734.8 915.6 743.1 913.1C751.5 910.6 761.6 907.0 768.3 901.8C775.0 896.6 773.3 886.5 783.4 881.7C793.4 876.9 818.6 873.7 828.6 872.9C838.7 872.1 841.2 876.0 843.7 876.7" fill="none" stroke="#c6cfe1" stroke-width="1.2" stroke-linecap="round" stroke-linejoin="round"/>
<path d="M760.7 911.9C761.2 919.4 762.0 945.4 763.2 957.1C764.5 968.8 769.5 973.9 768.3 982.2C767.0 990.6 761.6 998.6 755.7 1007.4C749.8 1016.2 736.9 1030.4 733.1 1035.0" fill="none" stroke="#c6cfe1" stroke-width="1.2" stroke-linecap="round" stroke-linejoin="round"/>
<path d="M843.7 876.7C852.1 875.4 878.9 873.3 894.0 869.1C909.1 864.9 927.5 854.5 934.2 851.5" fill="none" stroke="#c6cfe1" stroke-width="1.2" stroke-linecap="round" stroke-linejoin="round"/>
<path d="M768.3 982.2C774.6 983.9 796.8 983.5 806.0 992.3C815.2 1001.1 820.6 1027.9 823.6 1035.0" fill="none" stroke="#c6cfe1" stroke-width="1.2" stroke-linecap="round" stroke-linejoin="round"/>
<path d="M858.8 947.1C864.6 943.7 883.9 937.8 894.0 926.9C904.0 916.0 912.4 894.3 919.1 881.7C925.8 869.1 931.7 856.6 934.2 851.5" fill="none" stroke="#c6cfe1" stroke-width="1.2" stroke-linecap="round" stroke-linejoin="round"/>
<path d="M894.0 926.9C902.3 925.3 929.6 911.9 944.2 916.9C958.9 921.9 969.4 950.8 982.0 957.1C994.5 963.4 1003.7 958.8 1019.7 954.6C1035.7 950.4 1068.3 935.7 1078.0 932.0" fill="none" stroke="#c6cfe1" stroke-width="1.2" stroke-linecap="round" stroke-linejoin="round"/>
<path d="M944.2 1009.9C948.4 1005.3 963.1 991.0 969.4 982.2C975.7 973.4 978.6 969.7 982.0 957.1C985.3 944.5 986.1 924.4 989.5 906.8C992.8 889.2 1000.0 860.7 1002.1 851.5" fill="none" stroke="#c6cfe1" stroke-width="1.2" stroke-linecap="round" stroke-linejoin="round"/>
<path d="M368.0 766.1C371.4 768.2 383.1 777.8 388.1 778.6C393.1 779.5 396.5 772.3 398.2 771.1" fill="none" stroke="#c6cfe1" stroke-width="1.6" stroke-linecap="round" stroke-linejoin="round"/>
<path d="M368.0 642.2C372.1 641.8 384.5 640.3 392.8 639.7C401.0 639.1 409.3 633.9 417.6 638.5C425.8 643.0 438.2 662.2 442.3 667.0" fill="none" stroke="#c6cfe1" stroke-width="1.6" stroke-linecap="round" stroke-linejoin="round"/>
<path d="M417.6 638.5C420.0 637.8 427.5 637.4 432.4 634.8C437.4 632.1 444.8 624.4 447.3 622.4" fill="none" stroke="#c6cfe1" stroke-width="1.4" stroke-linecap="round" stroke-linejoin="round"/>
<path d="M449.8 694.2C446.5 698.3 436.1 710.7 429.9 719.0C423.7 727.3 416.3 737.2 412.6 743.8C408.9 750.4 408.5 756.2 407.6 758.6" fill="none" stroke="#c6cfe1" stroke-width="1.6" stroke-linecap="round" stroke-linejoin="round"/>
<path d="M370.0 427.4C373.6 424.4 382.7 415.9 391.7 409.3C400.8 402.6 413.5 394.8 424.3 387.6C435.2 380.3 446.1 372.5 457.0 365.8C467.8 359.2 479.9 353.3 489.6 347.7C499.2 342.1 507.1 338.5 514.9 332.5C522.8 326.4 531.2 318.6 536.7 311.5C542.1 304.3 545.6 296.4 547.5 289.7C549.5 283.1 549.8 277.3 548.3 271.6C546.8 265.9 542.8 260.7 538.5 255.3C534.1 249.9 524.9 241.7 522.2 239.0" fill="none" stroke="#8fa2c7" stroke-width="4.6" stroke-linecap="round" stroke-linejoin="round"/><path d="M370.0 427.4C373.6 424.4 382.7 415.9 391.7 409.3C400.8 402.6 413.5 394.8 424.3 387.6C435.2 380.3 446.1 372.5 457.0 365.8C467.8 359.2 479.9 353.3 489.6 347.7C499.2 342.1 507.1 338.5 514.9 332.5C522.8 326.4 531.2 318.6 536.7 311.5C542.1 304.3 545.6 296.4 547.5 289.7C549.5 283.1 549.8 277.3 548.3 271.6C546.8 265.9 542.8 260.7 538.5 255.3C534.1 249.9 524.9 241.7 522.2 239.0" fill="none" stroke="#b3c0dc" stroke-width="1.7999999999999998" stroke-linecap="round" stroke-linejoin="round"/>
<path d="M368.0 437.9C373.0 438.1 389.5 437.7 397.7 439.2C406.0 440.6 411.8 443.1 417.6 446.6C423.3 450.1 429.9 458.0 432.4 460.2" fill="none" stroke="#a3b3d2" stroke-width="2.2" stroke-linecap="round" stroke-linejoin="round"/>
<path d="M370.5 496.0C371.7 504.3 374.6 528.2 377.9 545.6C381.2 562.9 385.8 583.5 390.3 600.1C394.8 616.6 399.4 631.9 405.2 644.7C410.9 657.5 418.8 669.0 425.0 676.9C431.2 684.7 435.3 688.2 442.3 691.7C449.4 695.2 458.0 695.7 467.1 697.9C476.2 700.2 486.5 702.7 496.8 705.4C507.2 708.0 520.4 710.9 529.1 714.0C537.7 717.1 544.3 719.0 548.9 723.9C553.4 728.9 553.4 738.0 556.3 743.8C559.2 749.6 562.5 753.3 566.2 758.6C569.9 764.0 576.5 773.1 578.6 776.0" fill="none" stroke="#8fa2c7" stroke-width="4.6" stroke-linecap="round" stroke-linejoin="round"/><path d="M370.5 496.0C371.7 504.3 374.6 528.2 377.9 545.6C381.2 562.9 385.8 583.5 390.3 600.1C394.8 616.6 399.4 631.9 405.2 644.7C410.9 657.5 418.8 669.0 425.0 676.9C431.2 684.7 435.3 688.2 442.3 691.7C449.4 695.2 458.0 695.7 467.1 697.9C476.2 700.2 486.5 702.7 496.8 705.4C507.2 708.0 520.4 710.9 529.1 714.0C537.7 717.1 544.3 719.0 548.9 723.9C553.4 728.9 553.4 738.0 556.3 743.8C559.2 749.6 562.5 753.3 566.2 758.6C569.9 764.0 576.5 773.1 578.6 776.0" fill="none" stroke="#b3c0dc" stroke-width="1.7999999999999998" stroke-linecap="round" stroke-linejoin="round"/>
<path d="M613.3 612.5C612.1 614.5 608.3 619.5 605.9 624.8C603.4 630.2 600.7 637.2 598.4 644.7C596.2 652.1 593.7 661.2 592.2 669.4C590.8 677.7 590.4 686.0 589.8 694.2C589.1 702.5 588.5 710.7 588.5 719.0C588.5 727.3 589.1 734.3 589.8 743.8C590.4 753.3 591.8 770.6 592.2 776.0" fill="none" stroke="#8fa2c7" stroke-width="5.6000000000000005" stroke-linecap="round" stroke-linejoin="round"/><path d="M613.3 612.5C612.1 614.5 608.3 619.5 605.9 624.8C603.4 630.2 600.7 637.2 598.4 644.7C596.2 652.1 593.7 661.2 592.2 669.4C590.8 677.7 590.4 686.0 589.8 694.2C589.1 702.5 588.5 710.7 588.5 719.0C588.5 727.3 589.1 734.3 589.8 743.8C590.4 753.3 591.8 770.6 592.2 776.0" fill="none" stroke="#b3c0dc" stroke-width="2.8000000000000003" stroke-linecap="round" stroke-linejoin="round"/>
<path d="M589.2 756.0C589.6 760.2 590.7 774.4 591.7 781.1C592.8 787.8 595.9 789.5 595.5 796.2C595.1 802.9 591.9 812.1 589.2 821.4C586.5 830.6 582.9 840.6 579.2 851.5C575.4 862.4 569.9 876.7 566.6 886.7C563.2 896.8 560.9 903.5 559.1 911.9C557.2 920.2 556.1 929.5 555.3 937.0C554.4 944.5 553.4 949.6 554.0 957.1C554.7 964.6 556.1 973.9 559.1 982.2C562.0 990.6 568.7 999.0 571.6 1007.4C574.6 1015.8 575.8 1028.3 576.6 1032.5" fill="none" stroke="#8fa2c7" stroke-width="5.8" stroke-linecap="round" stroke-linejoin="round"/><path d="M589.2 756.0C589.6 760.2 590.7 774.4 591.7 781.1C592.8 787.8 595.9 789.5 595.5 796.2C595.1 802.9 591.9 812.1 589.2 821.4C586.5 830.6 582.9 840.6 579.2 851.5C575.4 862.4 569.9 876.7 566.6 886.7C563.2 896.8 560.9 903.5 559.1 911.9C557.2 920.2 556.1 929.5 555.3 937.0C554.4 944.5 553.4 949.6 554.0 957.1C554.7 964.6 556.1 973.9 559.1 982.2C562.0 990.6 568.7 999.0 571.6 1007.4C574.6 1015.8 575.8 1028.3 576.6 1032.5" fill="none" stroke="#b3c0dc" stroke-width="2.9999999999999996" stroke-linecap="round" stroke-linejoin="round"/>
<path d="M561.6 756.0C564.1 758.5 572.0 765.6 576.6 771.1C581.3 776.5 586.1 784.5 589.2 788.7C592.4 792.9 592.1 791.2 595.5 796.2C598.9 801.2 603.3 812.1 609.3 818.8C615.4 825.5 624.8 832.7 632.0 836.4C639.1 840.2 636.1 840.6 652.1 841.5C668.1 842.3 715.3 841.5 728.0 841.5" fill="none" stroke="#8fa2c7" stroke-width="4.4" stroke-linecap="round" stroke-linejoin="round"/><path d="M561.6 756.0C564.1 758.5 572.0 765.6 576.6 771.1C581.3 776.5 586.1 784.5 589.2 788.7C592.4 792.9 592.1 791.2 595.5 796.2C598.9 801.2 603.3 812.1 609.3 818.8C615.4 825.5 624.8 832.7 632.0 836.4C639.1 840.2 636.1 840.6 652.1 841.5C668.1 842.3 715.3 841.5 728.0 841.5" fill="none" stroke="#b3c0dc" stroke-width="1.6" stroke-linecap="round" stroke-linejoin="round"/>
<path d="M718.0 840.2C738.9 840.0 811.8 839.0 843.7 839.0C875.5 839.0 894.0 838.5 909.1 840.2C924.1 841.9 928.3 847.3 934.2 849.0C940.1 850.7 938.4 851.1 944.2 850.3C950.1 849.4 961.0 845.7 969.4 844.0C977.8 842.3 976.4 839.8 994.5 840.2C1012.6 840.6 1064.1 845.5 1078.0 846.5" fill="none" stroke="#8fa2c7" stroke-width="4.6" stroke-linecap="round" stroke-linejoin="round"/><path d="M718.0 840.2C738.9 840.0 811.8 839.0 843.7 839.0C875.5 839.0 894.0 838.5 909.1 840.2C924.1 841.9 928.3 847.3 934.2 849.0C940.1 850.7 938.4 851.1 944.2 850.3C950.1 849.4 961.0 845.7 969.4 844.0C977.8 842.3 976.4 839.8 994.5 840.2C1012.6 840.6 1064.1 845.5 1078.0 846.5" fill="none" stroke="#b3c0dc" stroke-width="1.7999999999999998" stroke-linecap="round" stroke-linejoin="round"/>
<path d="M757.6 250.9C759.3 252.5 762.6 255.0 767.6 260.8C772.5 266.6 782.8 277.3 787.4 285.6C791.9 293.8 792.7 302.1 794.8 310.3C796.9 318.6 798.3 326.8 799.8 335.1C801.2 343.4 802.7 351.6 803.5 359.9C804.3 368.1 804.7 375.6 804.7 384.7C804.7 393.7 805.5 404.1 803.5 414.4C801.4 424.7 796.7 437.1 792.3 446.6C788.0 456.1 784.5 464.4 777.5 471.4C770.4 478.4 758.5 484.2 750.2 488.7C742.0 493.3 733.3 496.2 727.9 498.6C722.5 501.1 719.7 502.8 718.0 503.6" fill="none" stroke="#8fa2c7" stroke-width="4.2" stroke-linecap="round" stroke-linejoin="round"/><path d="M757.6 250.9C759.3 252.5 762.6 255.0 767.6 260.8C772.5 266.6 782.8 277.3 787.4 285.6C791.9 293.8 792.7 302.1 794.8 310.3C796.9 318.6 798.3 326.8 799.8 335.1C801.2 343.4 802.7 351.6 803.5 359.9C804.3 368.1 804.7 375.6 804.7 384.7C804.7 393.7 805.5 404.1 803.5 414.4C801.4 424.7 796.7 437.1 792.3 446.6C788.0 456.1 784.5 464.4 777.5 471.4C770.4 478.4 758.5 484.2 750.2 488.7C742.0 493.3 733.3 496.2 727.9 498.6C722.5 501.1 719.7 502.8 718.0 503.6" fill="none" stroke="#b3c0dc" stroke-width="1.4" stroke-linecap="round" stroke-linejoin="round"/>
<path d="M990.5 253.3C986.4 255.0 974.0 259.5 965.8 263.3C957.5 267.0 950.1 270.7 941.0 275.6C931.9 280.6 921.6 287.2 911.3 293.0C900.9 298.8 888.1 305.8 879.1 310.3C870.0 314.9 864.2 316.1 856.8 320.2C849.3 324.4 840.2 331.0 834.5 335.1C828.7 339.2 825.0 341.3 822.1 345.0C819.2 348.7 817.9 355.3 817.1 357.4" fill="none" stroke="#8fa2c7" stroke-width="3.8" stroke-linecap="round" stroke-linejoin="round"/><path d="M990.5 253.3C986.4 255.0 974.0 259.5 965.8 263.3C957.5 267.0 950.1 270.7 941.0 275.6C931.9 280.6 921.6 287.2 911.3 293.0C900.9 298.8 888.1 305.8 879.1 310.3C870.0 314.9 864.2 316.1 856.8 320.2C849.3 324.4 840.2 331.0 834.5 335.1C828.7 339.2 825.0 341.3 822.1 345.0C819.2 348.7 817.9 355.3 817.1 357.4" fill="none" stroke="#b3c0dc" stroke-width="1.0" stroke-linecap="round" stroke-linejoin="round"/>
<path d="M787.4 285.6C787.0 290.9 784.1 309.5 784.9 317.8C785.7 326.0 791.1 332.2 792.3 335.1" fill="none" stroke="#a3b3d2" stroke-width="1.8" stroke-linecap="round" stroke-linejoin="round"/>
<path d="M718.0 501.0L727.9 496.0" fill="none" stroke="#8fa2c7" stroke-width="4.2" stroke-linecap="round" stroke-linejoin="round"/><path d="M718.0 501.0L727.9 496.0" fill="none" stroke="#b3c0dc" stroke-width="1.4" stroke-linecap="round" stroke-linejoin="round"/>
<path d="M727.9 496.0C729.4 498.5 739.3 513.8 742.8 520.8C746.2 527.7 758.9 557.9 762.6 565.4C766.3 572.8 777.2 590.5 779.9 595.1C782.7 599.7 783.9 609.6 789.9 611.2C795.8 612.8 832.7 609.9 839.4 611.2C846.1 612.6 853.0 621.7 856.8 624.8C860.5 627.9 873.1 638.7 876.6 642.2C880.0 645.7 888.5 656.3 891.4 659.5C894.4 662.7 902.8 671.9 906.3 674.4C909.8 676.9 923.6 682.4 926.1 684.3C928.6 686.2 928.1 692.0 931.1 693.0C934.1 694.0 950.4 693.1 955.9 694.2C961.3 695.3 980.9 701.6 985.6 704.1C990.3 706.6 1000.0 716.3 1002.9 719.0C1005.9 721.7 1014.1 730.1 1015.3 731.4" fill="none" stroke="#8fa2c7" stroke-width="4.2" stroke-linecap="round" stroke-linejoin="round"/><path d="M727.9 496.0C729.4 498.5 739.3 513.8 742.8 520.8C746.2 527.7 758.9 557.9 762.6 565.4C766.3 572.8 777.2 590.5 779.9 595.1C782.7 599.7 783.9 609.6 789.9 611.2C795.8 612.8 832.7 609.9 839.4 611.2C846.1 612.6 853.0 621.7 856.8 624.8C860.5 627.9 873.1 638.7 876.6 642.2C880.0 645.7 888.5 656.3 891.4 659.5C894.4 662.7 902.8 671.9 906.3 674.4C909.8 676.9 923.6 682.4 926.1 684.3C928.6 686.2 928.1 692.0 931.1 693.0C934.1 694.0 950.4 693.1 955.9 694.2C961.3 695.3 980.9 701.6 985.6 704.1C990.3 706.6 1000.0 716.3 1002.9 719.0C1005.9 721.7 1014.1 730.1 1015.3 731.4" fill="none" stroke="#b3c0dc" stroke-width="1.4" stroke-linecap="round" stroke-linejoin="round"/>
<path d="M803.5 414.4C805.8 417.7 813.2 427.6 817.1 434.2C821.0 440.8 824.5 446.6 827.0 454.0C829.5 461.5 831.1 474.7 832.0 478.8" fill="none" stroke="#a3b3d2" stroke-width="2.2" stroke-linecap="round" stroke-linejoin="round"/>
<g filter="url(#halo)">
<text x="471.0" y="241.5" font-size="15.7" fill="#22262c" text-anchor="start" stroke="#22262c" stroke-width="1" stroke-linejoin="round" textLength="118" lengthAdjust="spacingAndGlyphs">Champigneulles</text>
<text x="743.0" y="247.0" font-size="15.7" fill="#22262c" text-anchor="start" stroke="#22262c" stroke-width="1" stroke-linejoin="round" textLength="74" lengthAdjust="spacingAndGlyphs">Agincourt</text>
<text x="820.0" y="336.5" font-size="15.7" fill="#22262c" text-anchor="start" stroke="#22262c" stroke-width="1" stroke-linejoin="round" textLength="83" lengthAdjust="spacingAndGlyphs">Seichamps</text>
<text x="1026.0" y="356.0" font-size="15.7" fill="#22262c" text-anchor="start" stroke="#22262c" stroke-width="1" stroke-linejoin="round">Velaine</text>
<text x="497.0" y="358.0" font-size="15.7" fill="#22262c" text-anchor="start" stroke="#22262c" stroke-width="1" stroke-linejoin="round">Maxéville</text>
<text x="712.0" y="374.0" font-size="15.7" fill="#22262c" text-anchor="start" stroke="#22262c" stroke-width="1" stroke-linejoin="round" textLength="125" lengthAdjust="spacingAndGlyphs">Essey-lès-Nancy</text>
<text x="822.0" y="413.0" font-size="15.7" fill="#22262c" text-anchor="start" stroke="#22262c" stroke-width="1" stroke-linejoin="round">Pulnoy</text>
<text x="992.0" y="433.0" font-size="15.7" fill="#22262c" text-anchor="start" stroke="#22262c" stroke-width="1" stroke-linejoin="round" textLength="57" lengthAdjust="spacingAndGlyphs">Cerville</text>
<text x="736.0" y="480.5" font-size="15.7" fill="#22262c" text-anchor="start" stroke="#22262c" stroke-width="1" stroke-linejoin="round" textLength="154" lengthAdjust="spacingAndGlyphs">Saulxures-lès-Nancy</text>
<text x="466.0" y="500.0" font-size="15.7" fill="#22262c" text-anchor="start" stroke="#22262c" stroke-width="1" stroke-linejoin="round">Laxou</text>
<text x="429.0" y="558.0" font-size="15.7" fill="#22262c" text-anchor="start" stroke="#22262c" stroke-width="1" stroke-linejoin="round" textLength="127" lengthAdjust="spacingAndGlyphs">Villers-lès-Nancy</text>
<text x="581.0" y="551.5" font-size="15.7" fill="#22262c" text-anchor="start" stroke="#22262c" stroke-width="1" stroke-linejoin="round" textLength="160" lengthAdjust="spacingAndGlyphs">Jarville-la-Malgrange</text>
<text x="971.0" y="563.5" font-size="15.7" fill="#22262c" text-anchor="start" stroke="#22262c" stroke-width="1" stroke-linejoin="round" textLength="86" lengthAdjust="spacingAndGlyphs">Lenoncourt</text>
<text x="664.0" y="648.5" font-size="15.7" fill="#22262c" text-anchor="start" stroke="#22262c" stroke-width="1" stroke-linejoin="round" textLength="202" lengthAdjust="spacingAndGlyphs">Laneuveville-devant-Nancy</text>
<text x="393.0" y="767.5" font-size="15.7" fill="#22262c" text-anchor="start" stroke="#22262c" stroke-width="1" stroke-linejoin="round" textLength="69" lengthAdjust="spacingAndGlyphs">Chavigny</text>
<text x="593.0" y="808.5" font-size="15.7" fill="#22262c" text-anchor="start" stroke="#22262c" stroke-width="1" stroke-linejoin="round" textLength="162" lengthAdjust="spacingAndGlyphs">Fléville-devant-Nancy</text>
<text x="905.0" y="798.5" font-size="15.7" fill="#22262c" text-anchor="start" stroke="#22262c" stroke-width="1" stroke-linejoin="round" textLength="162" lengthAdjust="spacingAndGlyphs">Saint-Nicolas-de-Port</text>
<text x="499.0" y="835.0" font-size="15.7" fill="#22262c" text-anchor="start" stroke="#22262c" stroke-width="1" stroke-linejoin="round" textLength="51" lengthAdjust="spacingAndGlyphs">Ludres</text>
<text x="1011.0" y="749.0" font-size="15.7" fill="#22262c" text-anchor="start" stroke="#22262c" stroke-width="1" stroke-linejoin="round">Varangéville</text>
<text x="392.0" y="867.5" font-size="15.7" fill="#22262c" text-anchor="end" stroke="#22262c" stroke-width="1" stroke-linejoin="round">Maizières-lons</text>
<text x="428.0" y="893.0" font-size="15.7" fill="#22262c" text-anchor="start" stroke="#22262c" stroke-width="1" stroke-linejoin="round" textLength="63" lengthAdjust="spacingAndGlyphs">Messein</text>
<text x="760.0" y="870.5" font-size="15.7" fill="#22262c" text-anchor="start" stroke="#22262c" stroke-width="1" stroke-linejoin="round" textLength="143" lengthAdjust="spacingAndGlyphs">Ville-en-Vermois</text>
<text x="499.0" y="976.5" font-size="15.7" fill="#22262c" text-anchor="start" stroke="#22262c" stroke-width="1" stroke-linejoin="round" textLength="98" lengthAdjust="spacingAndGlyphs">Richardménil</text>
<text x="1038.0" y="985.0" font-size="15.7" fill="#22262c" text-anchor="start" stroke="#22262c" stroke-width="1" stroke-linejoin="round">Rosières</text>
<text x="745.0" y="1009.5" font-size="15.7" fill="#22262c" text-anchor="start" stroke="#22262c" stroke-width="1" stroke-linejoin="round" textLength="48" lengthAdjust="spacingAndGlyphs">Azelot</text>
<text x="905.0" y="1006.0" font-size="15.7" fill="#22262c" text-anchor="start" stroke="#22262c" stroke-width="1" stroke-linejoin="round" textLength="65" lengthAdjust="spacingAndGlyphs">Coyviller</text>
<text x="406.0" y="415.0" font-size="11" fill="#33373f" letter-spacing="1.300" stroke="#33373f" stroke-width=".550" textLength="99" lengthAdjust="spacing">HAUT-DU-LIÈVRE</text>
<text x="1017.0" y="455.5" font-size="11" fill="#33373f" letter-spacing="1.300" stroke="#33373f" stroke-width=".550" textLength="60" lengthAdjust="spacing">CERCŒUR</text>
<text x="401.0" y="534.0" font-size="11" fill="#33373f" letter-spacing="1.300" stroke="#33373f" stroke-width=".550" textLength="66" lengthAdjust="spacing">MARÉVILLE</text>
<text x="557.0" y="526.0" font-size="11" fill="#33373f" letter-spacing="1.300" stroke="#33373f" stroke-width=".550" textLength="55" lengthAdjust="spacing">SAURUPT</text>
<text x="758.0" y="606.5" font-size="11" fill="#33373f" letter-spacing="1.300" stroke="#33373f" stroke-width=".550" textLength="79" lengthAdjust="spacing">BOSSERVILLE</text>
<text x="1061.0" y="602.0" font-size="11" fill="#33373f" letter-spacing="1.300" stroke="#33373f" stroke-width=".550" textLength="14" lengthAdjust="spacing">LE</text>
<text x="364.0" y="637.0" font-size="11" fill="#33373f" letter-spacing="1.300" stroke="#33373f" stroke-width=".550" textLength="20" lengthAdjust="spacing">IEU</text>
<text x="813.0" y="779.5" font-size="11" fill="#33373f" letter-spacing="1.300" stroke="#33373f" stroke-width=".550" textLength="51" lengthAdjust="spacing">LE CLOS</text>
<text x="808.0" y="790.5" font-size="11" fill="#33373f" letter-spacing="1.300" stroke="#33373f" stroke-width=".550" textLength="60" lengthAdjust="spacing">CARDINAL</text>
<text font-size="11.500" fill="#5b9bd0" font-style="italic" transform="translate(562 256) rotate(80)">La Meurthe</text>
<text font-size="11.500" fill="#5b9bd0" font-style="italic" transform="translate(934 743) rotate(15)">La Meurthe</text>
<g transform="translate(467.500 668.500)"><path d="M0 18C-3 13 -12.500 8 -12.500 -0.500A12.500 12.500 0 1 1 12.500 -0.500C12.500 8 3 13 0 18Z" fill="#fff"/><circle cx="0" cy="-0.500" r="10.200" fill="#e0524d"/><text x="0" y="4.500" text-anchor="middle" font-size="13" fill="#fff" style="font-weight:bold">H</text></g>
<text x="486.500" y="668.500" font-size="16" fill="#c8565a" stroke="#c8565a" stroke-width=".250" textLength="127" lengthAdjust="spacingAndGlyphs">CHRU de Nancy -</text>
<text x="486.500" y="685.500" font-size="16" fill="#c8565a" stroke="#c8565a" stroke-width=".250" textLength="150" lengthAdjust="spacingAndGlyphs">Hôpitaux de Brabois</text>
</g>
<g><rect x="987.4" y="239.5" width="34.3" height="14" rx="2" fill="#f7d24a" stroke="#e0b93a" stroke-width=".800"/><text x="1004.5" y="250.5" text-anchor="middle" font-size="10.500" fill="#5a4a10" style="font-weight:bold">D674</text></g>
<g><rect x="761.7" y="269.0" width="27.6" height="14" rx="2" fill="#f7d24a" stroke="#e0b93a" stroke-width=".800"/><text x="775.5" y="280.0" text-anchor="middle" font-size="10.500" fill="#5a4a10" style="font-weight:bold">D83</text></g>
<g><rect x="407.3" y="668.0" width="26.4" height="14" rx="1.500" fill="#d8605c" stroke="#f0c0bc" stroke-width=".800"/><text x="420.5" y="679.0" text-anchor="middle" font-size="10.500" fill="#fff" style="font-weight:bold">A33</text></g>
<g><rect x="570.6" y="694.0" width="32.7" height="14" rx="1.500" fill="#d8605c" stroke="#f0c0bc" stroke-width=".800"/><text x="587.0" y="705.0" text-anchor="middle" font-size="10.500" fill="#fff" style="font-weight:bold">A330</text></g>
<g><rect x="604.8" y="818.0" width="26.4" height="14" rx="1.500" fill="#d8605c" stroke="#f0c0bc" stroke-width=".800"/><text x="618.0" y="829.0" text-anchor="middle" font-size="10.500" fill="#fff" style="font-weight:bold">A33</text></g>
<g><rect x="765.3" y="833.5" width="26.4" height="14" rx="1.500" fill="#d8605c" stroke="#f0c0bc" stroke-width=".800"/><text x="778.5" y="844.5" text-anchor="middle" font-size="10.500" fill="#fff" style="font-weight:bold">A33</text></g>
<g><rect x="992.3" y="833.5" width="26.4" height="14" rx="1.500" fill="#d8605c" stroke="#f0c0bc" stroke-width=".800"/><text x="1005.5" y="844.5" text-anchor="middle" font-size="10.500" fill="#fff" style="font-weight:bold">A33</text></g>
<g><rect x="514.9" y="891.5" width="34.3" height="14" rx="2" fill="#f7d24a" stroke="#e0b93a" stroke-width=".800"/><text x="532.0" y="902.5" text-anchor="middle" font-size="10.500" fill="#5a4a10" style="font-weight:bold">D331</text></g>
<g><rect x="539.1" y="931.5" width="32.7" height="14" rx="1.500" fill="#d8605c" stroke="#f0c0bc" stroke-width=".800"/><text x="555.5" y="942.5" text-anchor="middle" font-size="10.500" fill="#fff" style="font-weight:bold">A330</text></g>
<g><rect x="354.8" y="432.0" width="26.4" height="14" rx="1.500" fill="#d8605c" stroke="#f0c0bc" stroke-width=".800"/><text x="368.0" y="443.0" text-anchor="middle" font-size="10.500" fill="#fff" style="font-weight:bold">A31</text></g>
<path d="M509.5 239.0C512.2 242.0 518.9 251.7 525.8 257.1C532.7 262.6 545.7 264.4 551.2 271.6C556.6 278.9 559.0 290.3 558.4 300.6C557.8 310.9 550.3 324.7 547.5 333.2C544.8 341.7 543.0 348.3 542.1 351.3" fill="none" stroke="#f6d14d" stroke-width="3.4" stroke-linecap="round"/>
<path d="M477.0 454.0L526.6 468.9L539.0 483.8L541.4 473.9" fill="none" stroke="#c4d07f" stroke-width="3.2" stroke-linecap="round" stroke-linejoin="round" stroke-opacity=".850"/>
<path d="M478.7 456.4L522.2 463.6" fill="none" stroke="#c4d07f" stroke-width="3.2" stroke-linecap="round" stroke-linejoin="round" stroke-opacity=".850"/>
<path d="M462.2 525.7L477.0 515.8L524.1 507.1L526.6 511.4L529.1 505.9L561.3 498.5L563.7 491.0L578.6 481.1L583.6 458.8L578.6 451.4" fill="none" stroke="#4fb592" stroke-width="3.2" stroke-linecap="round" stroke-linejoin="round" stroke-opacity=".850"/>
<path d="M462.2 525.7L501.8 557.9L541.4 592.6L563.7 610.0L576.1 630.3L598.4 621.1L605.9 614.9" fill="none" stroke="#4fb592" stroke-width="3.2" stroke-linecap="round" stroke-linejoin="round" stroke-opacity=".850"/>
<path d="M563.7 496.0L573.6 520.8L586.0 540.6L600.9 555.5" fill="none" stroke="#4fb592" stroke-width="3.2" stroke-linecap="round" stroke-linejoin="round" stroke-opacity=".850"/>
<path d="M552.8 478.5L560.9 496.5L589.4 485.3L606.7 479.1L619.1 482.8L643.9 484.1L673.7 474.8L672.5 470.0" fill="none" stroke="#a27be9" stroke-width="3.4000000000000004" stroke-linecap="round" stroke-linejoin="round" stroke-opacity=".850"/>
<path d="M553.0 478.1L572.9 474.5L587.4 470.9" fill="none" stroke="#a27be9" stroke-width="3.4000000000000004" stroke-linecap="round" stroke-linejoin="round" stroke-opacity=".850"/>
<path d="M613.3 328.2L599.7 329.2L598.9 354.9L602.1 374.8L600.9 384.7L586.0 399.5L576.1 409.4L566.2 420.6" fill="none" stroke="#d750cd" stroke-width="3.4000000000000004" stroke-linecap="round" stroke-linejoin="round" stroke-opacity=".850"/>
<path d="M609.6 359.9L615.8 371.0L634.4 362.9L640.5 357.4L655.4 352.5L665.3 345.0L669.0 351.2L676.5 352.5L687.6 345.0L702.5 341.3L705.0 357.4L728.0 359.9" fill="none" stroke="#d750cd" stroke-width="3.4000000000000004" stroke-linecap="round" stroke-linejoin="round" stroke-opacity=".850"/>
<path d="M718.0 354.9L725.4 359.9L730.4 374.8L742.8 377.2L745.8 380.9" fill="none" stroke="#d750cd" stroke-width="3.4000000000000004" stroke-linecap="round" stroke-linejoin="round" stroke-opacity=".850"/>
<path d="M566.2 426.8L583.6 414.4L615.8 407.0L635.6 390.9L638.1 394.6L665.3 414.4L728.0 387.1" fill="none" stroke="#d750cd" stroke-width="3.4000000000000004" stroke-linecap="round" stroke-linejoin="round" stroke-opacity=".850"/>
<path d="M718.0 389.6L732.9 384.7L749.0 384.2L750.2 393.3L767.6 388.4L804.7 367.3L810.9 368.6L817.1 389.6L822.1 414.4L846.8 413.2L849.3 421.8L866.7 419.3L867.9 424.3" fill="none" stroke="#d750cd" stroke-width="3.4000000000000004" stroke-linecap="round" stroke-linejoin="round" stroke-opacity=".850"/>
<path d="M606.2 492.6L623.6 499.9L645.4 525.2L667.1 557.8L670.7 576.0L678.0 583.2L685.2 601.3L678.0 619.4L676.2 640.1" fill="none" stroke="#4b70e0" stroke-width="3.8" stroke-linecap="round" stroke-linejoin="round" stroke-opacity=".850"/>
<path d="M670.7 576.0L696.1 586.8L732.3 608.6L761.3 630.3L759.5 640.1" fill="none" stroke="#4b70e0" stroke-width="3.8" stroke-linecap="round" stroke-linejoin="round" stroke-opacity=".850"/>
<path d="M676.2 636.0L685.2 672.2L690.7 708.5L694.3 737.4L688.8 780.9L696.1 791.8L717.8 799.0L732.3 813.5L750.4 831.7L754.1 849.8L764.9 867.9L768.6 875.1L775.1 883.1L758.4 909.6" fill="none" stroke="#4b70e0" stroke-width="3.5999999999999996" stroke-linecap="round" stroke-linejoin="round" stroke-opacity=".850"/>
<path d="M779.4 882.4L804.8 875.1L830.1 869.7L841.0 855.2L851.9 853.4L866.4 858.8L906.2 848.0L913.5 842.5L935.2 831.7L964.2 817.2L966.0 813.5L962.4 809.9L964.9 801.9" fill="none" stroke="#4b70e0" stroke-width="3.5999999999999996" stroke-linecap="round" stroke-linejoin="round" stroke-opacity=".850"/>
<path d="M759.5 636.0L768.6 657.7L797.5 683.1L837.4 708.5L877.2 719.3L906.2 726.6L935.2 741.1L957.0 750.1L967.8 755.6L966.0 773.7" fill="none" stroke="#4b70e0" stroke-width="3.8" stroke-linecap="round" stroke-linejoin="round" stroke-opacity=".850"/>
<g transform="translate(478.7 452.8)"><path d="M0 0C-6.300 -5.500 -12.900 -11.500 -12.900 -22.600A12.900 12.900 0 1 1 12.900 -22.600C12.900 -11.500 6.300 -5.500 0 0Z" fill="#c4d07f" stroke="#1f2114" stroke-width="1.500"/></g>
<g transform="translate(514.9 456.4)"><path d="M0 0C-6.300 -5.500 -12.900 -11.500 -12.900 -22.600A12.900 12.900 0 1 1 12.900 -22.600C12.900 -11.500 6.300 -5.500 0 0Z" fill="#c4d07f" stroke="#1f2114" stroke-width="1.500"/></g>
<g transform="translate(522.2 455.7)"><path d="M0 0C-6.300 -5.500 -12.900 -11.500 -12.900 -22.600A12.900 12.900 0 1 1 12.900 -22.600C12.900 -11.500 6.300 -5.500 0 0Z" fill="#c4d07f" stroke="#1f2114" stroke-width="1.500"/></g>
<g transform="translate(527.6 452.8)"><path d="M0 0C-6.300 -5.500 -12.900 -11.500 -12.900 -22.600A12.900 12.900 0 1 1 12.900 -22.600C12.900 -11.500 6.300 -5.500 0 0Z" fill="#c4d07f" stroke="#1f2114" stroke-width="1.500"/></g>
<g transform="translate(509.5 458.6)"><path d="M0 0C-6.300 -5.500 -12.900 -11.500 -12.900 -22.600A12.900 12.900 0 1 1 12.900 -22.600C12.900 -11.500 6.300 -5.500 0 0Z" fill="#c4d07f" stroke="#1f2114" stroke-width="1.500"/></g>
<g transform="translate(496.8 456.4)"><path d="M0 0C-6.300 -5.500 -12.900 -11.500 -12.900 -22.600A12.900 12.900 0 1 1 12.900 -22.600C12.900 -11.500 6.300 -5.500 0 0Z" fill="#c4d07f" stroke="#1f2114" stroke-width="1.500"/></g>
<g transform="translate(481.2 454.6)"><path d="M0 0C-6.300 -5.500 -12.900 -11.500 -12.900 -22.600A12.900 12.900 0 1 1 12.900 -22.600C12.900 -11.500 6.300 -5.500 0 0Z" fill="#c4d07f" stroke="#1f2114" stroke-width="1.500"/><g transform="translate(0 0.800) scale(.840)" fill="none" stroke="#fff" stroke-width="1.450" stroke-linejoin="round" opacity=".9"><path d="M0 -30.200L6.400 -27L0 -23.800L-6.400 -27Z" fill="#fff" fill-opacity=".35"/><path d="M-6.400 -24L0 -20.800L6.400 -24"/><path d="M-6.400 -21L0 -17.800L6.400 -21"/></g><circle cx="10.600" cy="-32.400" r="7.800" fill="#e0574c"/><text x="10.600" y="-28.100" text-anchor="middle" font-size="12.500" fill="#fff" stroke="#fff" stroke-width=".350">5</text></g>
<g transform="translate(503.0 457.5)"><path d="M0 0C-6.300 -5.500 -12.900 -11.500 -12.900 -22.600A12.900 12.900 0 1 1 12.900 -22.600C12.900 -11.500 6.300 -5.500 0 0Z" fill="#c4d07f" stroke="#1f2114" stroke-width="1.500"/><g transform="translate(0 0.800) scale(.840)" fill="none" stroke="#fff" stroke-width="1.450" stroke-linejoin="round" opacity=".9"><path d="M0 -30.200L6.400 -27L0 -23.800L-6.400 -27Z" fill="#fff" fill-opacity=".35"/><path d="M-6.400 -24L0 -20.800L6.400 -24"/><path d="M-6.400 -21L0 -17.800L6.400 -21"/></g><circle cx="10.600" cy="-32.400" r="7.800" fill="#e0574c"/><text x="10.600" y="-28.100" text-anchor="middle" font-size="12.500" fill="#fff" stroke="#fff" stroke-width=".350">2</text></g>
<g transform="translate(553.0 398.4)"><path d="M0 0C-6.300 -5.500 -12.900 -11.500 -12.900 -22.600A12.900 12.900 0 1 1 12.900 -22.600C12.900 -11.500 6.300 -5.500 0 0Z" fill="#8a2a86" stroke="#160615" stroke-width="1.500"/></g>
<g transform="translate(555.5 402.8)"><path d="M0 0C-6.300 -5.500 -12.900 -11.500 -12.900 -22.600A12.900 12.900 0 1 1 12.900 -22.600C12.900 -11.500 6.300 -5.500 0 0Z" fill="#8a2a86" stroke="#160615" stroke-width="1.500"/></g>
<g transform="translate(558.4 406.4)"><path d="M0 0C-6.300 -5.500 -12.900 -11.500 -12.900 -22.600A12.900 12.900 0 1 1 12.900 -22.600C12.900 -11.500 6.300 -5.500 0 0Z" fill="#8a2a86" stroke="#160615" stroke-width="1.500"/></g>
<g transform="translate(560.9 410.7)"><path d="M0 0C-6.300 -5.500 -12.900 -11.500 -12.900 -22.600A12.900 12.900 0 1 1 12.900 -22.600C12.900 -11.500 6.300 -5.500 0 0Z" fill="#8a2a86" stroke="#160615" stroke-width="1.500"/></g>
<g transform="translate(545.7 383.9)"><path d="M0 0C-6.300 -5.500 -12.900 -11.500 -12.900 -22.600A12.900 12.900 0 1 1 12.900 -22.600C12.900 -11.500 6.300 -5.500 0 0Z" fill="#f6d14d" stroke="#27210c" stroke-width="1.500"/></g>
<g transform="translate(548.3 386.8)"><path d="M0 0C-6.300 -5.500 -12.900 -11.500 -12.900 -22.600A12.900 12.900 0 1 1 12.900 -22.600C12.900 -11.500 6.300 -5.500 0 0Z" fill="#f6d14d" stroke="#27210c" stroke-width="1.500"/><g transform="translate(0 0.800) scale(.840)" fill="none" stroke="#fff" stroke-width="1.450" stroke-linejoin="round" opacity=".9"><path d="M0 -30.200L6.400 -27L0 -23.800L-6.400 -27Z" fill="#fff" fill-opacity=".35"/><path d="M-6.400 -24L0 -20.800L6.400 -24"/><path d="M-6.400 -21L0 -17.800L6.400 -21"/></g><circle cx="10.600" cy="-32.400" r="7.800" fill="#e0574c"/><text x="10.600" y="-28.100" text-anchor="middle" font-size="12.500" fill="#fff" stroke="#fff" stroke-width=".350">3</text></g>
<g transform="translate(563.1 416.5)"><path d="M0 0C-6.300 -5.500 -12.900 -11.500 -12.900 -22.600A12.900 12.900 0 1 1 12.900 -22.600C12.900 -11.500 6.300 -5.500 0 0Z" fill="#d750cd" stroke="#220c20" stroke-width="1.500"/><text x="0" y="-11.900" text-anchor="middle" font-size="18" fill="#fff" fill-opacity=".95" stroke="#fff" stroke-width=".700" stroke-opacity=".9" letter-spacing="-0.100">26</text></g>
<g transform="translate(591 421)"><circle r="11" fill="#fff" stroke="#d750cd" stroke-width="3"/><rect x="-5" y="-4" width="10" height="7" rx="1.500" fill="none" stroke="#d750cd" stroke-width="1.300"/></g>
<g transform="translate(562.0 470.9)"><path d="M0 0C-6.300 -5.500 -12.900 -11.500 -12.900 -22.600A12.900 12.900 0 1 1 12.900 -22.600C12.900 -11.500 6.300 -5.500 0 0Z" fill="#d750cd" stroke="#220c20" stroke-width="1.500"/><text x="0" y="-11.900" text-anchor="middle" font-size="18" fill="#fff" fill-opacity=".95" stroke="#fff" stroke-width=".700" stroke-opacity=".9" letter-spacing="-0.100">32</text></g>
<g transform="translate(623.6 489.0)"><path d="M0 0C-6.300 -5.500 -12.900 -11.500 -12.900 -22.600A12.900 12.900 0 1 1 12.900 -22.600C12.900 -11.500 6.300 -5.500 0 0Z" fill="#a27be9" stroke="#191325" stroke-width="1.500"/></g>
<g transform="translate(629.1 488.3)"><path d="M0 0C-6.300 -5.500 -12.900 -11.500 -12.900 -22.600A12.900 12.900 0 1 1 12.900 -22.600C12.900 -11.500 6.300 -5.500 0 0Z" fill="#a27be9" stroke="#191325" stroke-width="1.500"/></g>
<g transform="translate(540.3 483.6)"><path d="M0 0C-6.300 -5.500 -12.900 -11.500 -12.900 -22.600A12.900 12.900 0 1 1 12.900 -22.600C12.900 -11.500 6.300 -5.500 0 0Z" fill="#c4d07f" stroke="#1f2114" stroke-width="1.500"/><g transform="translate(0 0.800) scale(.840)" fill="none" stroke="#fff" stroke-width="1.450" stroke-linejoin="round" opacity=".9"><path d="M0 -30.200L6.400 -27L0 -23.800L-6.400 -27Z" fill="#fff" fill-opacity=".35"/><path d="M-6.400 -24L0 -20.800L6.400 -24"/><path d="M-6.400 -21L0 -17.800L6.400 -21"/></g></g>
<g transform="translate(543.2 452.8)"><path d="M0 0C-6.300 -5.500 -12.900 -11.500 -12.900 -22.600A12.900 12.900 0 1 1 12.900 -22.600C12.900 -11.500 6.300 -5.500 0 0Z" fill="#d750cd" stroke="#220c20" stroke-width="1.500"/><g transform="translate(0 0.800) scale(.840)" fill="none" stroke="#fff" stroke-width="1.450" stroke-linejoin="round" opacity=".9"><path d="M0 -30.200L6.400 -27L0 -23.800L-6.400 -27Z" fill="#fff" fill-opacity=".35"/><path d="M-6.400 -24L0 -20.800L6.400 -24"/><path d="M-6.400 -21L0 -17.800L6.400 -21"/></g><circle cx="10.600" cy="-32.400" r="7.800" fill="#e0574c"/><text x="10.600" y="-28.100" text-anchor="middle" font-size="12.500" fill="#fff" stroke="#fff" stroke-width=".350">4</text></g>
<circle cx="553.0" cy="450.2" r="7.900" fill="#e0574c"/><text x="553.0" y="454.4" text-anchor="middle" font-size="12" fill="#fff" style="font-weight:bold">2</text>
<g transform="translate(608.2 495.1)"><path d="M0 0C-2.600 -6.500 -12.600 -14 -12.600 -25A12.600 12.600 0 1 1 12.600 -25C12.600 -14 2.600 -6.500 0 0Z" fill="#4b70e0"/><circle cx="0" cy="-25" r="9.400" fill="#fff"/><path d="M-4.800 -25.500L-3.600 -29.200H3.600L4.800 -25.500Z" fill="none" stroke="#4b70e0" stroke-width="1.300" stroke-linejoin="round"/><rect x="-6.200" y="-25.800" width="12.400" height="4.600" rx="1.200" fill="#4b70e0"/><rect x="-5.600" y="-21.600" width="2.400" height="1.800" fill="#4b70e0"/><rect x="3.200" y="-21.600" width="2.400" height="1.800" fill="#4b70e0"/></g>
<g transform="translate(579.4 465.4)"><path d="M0 0C-6.300 -5.500 -12.900 -11.500 -12.900 -22.600A12.900 12.900 0 1 1 12.900 -22.600C12.900 -11.500 6.300 -5.500 0 0Z" fill="#4fb592" stroke="#0c1c17" stroke-width="1.500"/><g transform="translate(0 0.800) scale(.840)" fill="none" stroke="#fff" stroke-width="1.450" stroke-linejoin="round" opacity=".9"><path d="M0 -30.200L6.400 -27L0 -23.800L-6.400 -27Z" fill="#fff" fill-opacity=".35"/><path d="M-6.400 -24L0 -20.800L6.400 -24"/><path d="M-6.400 -21L0 -17.800L6.400 -21"/></g><circle cx="10.600" cy="-32.400" r="7.800" fill="#e0574c"/><text x="10.600" y="-28.100" text-anchor="middle" font-size="12.500" fill="#fff" stroke="#fff" stroke-width=".350">6</text></g>
<g transform="translate(610.9 447.3)"><path d="M0 0C-6.300 -5.500 -12.900 -11.500 -12.900 -22.600A12.900 12.900 0 1 1 12.900 -22.600C12.900 -11.500 6.300 -5.500 0 0Z" fill="#a27be9" stroke="#191325" stroke-width="1.500"/></g>
<g transform="translate(659.9 441.9)"><path d="M0 0C-6.300 -5.500 -12.900 -11.500 -12.900 -22.600A12.900 12.900 0 1 1 12.900 -22.600C12.900 -11.500 6.300 -5.500 0 0Z" fill="#a27be9" stroke="#191325" stroke-width="1.500"/></g>
<g transform="translate(664.2 448.4)"><path d="M0 0C-6.300 -5.500 -12.900 -11.500 -12.900 -22.600A12.900 12.900 0 1 1 12.900 -22.600C12.900 -11.500 6.300 -5.500 0 0Z" fill="#a27be9" stroke="#191325" stroke-width="1.500"/></g>
<g transform="translate(662.0 456.4)"><path d="M0 0C-6.300 -5.500 -12.900 -11.500 -12.900 -22.600A12.900 12.900 0 1 1 12.900 -22.600C12.900 -11.500 6.300 -5.500 0 0Z" fill="#a27be9" stroke="#191325" stroke-width="1.500"/><text x="0" y="-11.900" text-anchor="middle" font-size="18" fill="#fff" fill-opacity=".95" stroke="#fff" stroke-width=".700" stroke-opacity=".9" letter-spacing="-0.100">20</text></g>
<g transform="translate(644.6 437.0)"><path d="M0 0C-6.300 -5.500 -12.900 -11.500 -12.900 -22.600A12.900 12.900 0 1 1 12.900 -22.600C12.900 -11.500 6.300 -5.500 0 0Z" fill="#a27be9" stroke="#191325" stroke-width="1.500"/><text x="0" y="-11.900" text-anchor="middle" font-size="18" fill="#fff" fill-opacity=".95" stroke="#fff" stroke-width=".700" stroke-opacity=".9" letter-spacing="-0.100">22</text></g>
<g transform="translate(615.7 461.8)"><path d="M0 0C-6.300 -5.500 -12.900 -11.500 -12.900 -22.600A12.900 12.900 0 1 1 12.900 -22.600C12.900 -11.500 6.300 -5.500 0 0Z" fill="#a27be9" stroke="#191325" stroke-width="1.500"/><g transform="translate(0 0.800) scale(.840)" fill="none" stroke="#fff" stroke-width="1.450" stroke-linejoin="round" opacity=".9"><path d="M0 -30.200L6.400 -27L0 -23.800L-6.400 -27Z" fill="#fff" fill-opacity=".35"/><path d="M-6.400 -24L0 -20.800L6.400 -24"/><path d="M-6.400 -21L0 -17.800L6.400 -21"/></g><circle cx="10.600" cy="-32.400" r="7.800" fill="#e0574c"/><text x="10.600" y="-28.100" text-anchor="middle" font-size="12.500" fill="#fff" stroke="#fff" stroke-width=".350">3</text></g>
<g transform="translate(673.6 470.9)"><path d="M0 0C-6.300 -5.500 -12.900 -11.500 -12.900 -22.600A12.900 12.900 0 1 1 12.900 -22.600C12.900 -11.500 6.300 -5.500 0 0Z" fill="#a27be9" stroke="#191325" stroke-width="1.500"/></g>
<g transform="translate(670.0 467.6)"><path d="M0 0C-6.300 -5.500 -12.900 -11.500 -12.900 -22.600A12.900 12.900 0 1 1 12.900 -22.600C12.900 -11.500 6.300 -5.500 0 0Z" fill="#a27be9" stroke="#191325" stroke-width="1.500"/><g transform="translate(0 0.800) scale(.840)" fill="none" stroke="#fff" stroke-width="1.450" stroke-linejoin="round" opacity=".9"><path d="M0 -30.200L6.400 -27L0 -23.800L-6.400 -27Z" fill="#fff" fill-opacity=".35"/><path d="M-6.400 -24L0 -20.800L6.400 -24"/><path d="M-6.400 -21L0 -17.800L6.400 -21"/></g><circle cx="10.600" cy="-32.400" r="7.800" fill="#e0574c"/><text x="10.600" y="-28.100" text-anchor="middle" font-size="12.500" fill="#fff" stroke="#fff" stroke-width=".350">5</text></g>
<g transform="translate(637.0 486.5)"><path d="M0 0C-6.300 -5.500 -12.900 -11.500 -12.900 -22.600A12.900 12.900 0 1 1 12.900 -22.600C12.900 -11.500 6.300 -5.500 0 0Z" fill="#a27be9" stroke="#191325" stroke-width="1.500"/><g transform="translate(0 0.800) scale(.840)" fill="none" stroke="#fff" stroke-width="1.450" stroke-linejoin="round" opacity=".9"><path d="M0 -30.200L6.400 -27L0 -23.800L-6.400 -27Z" fill="#fff" fill-opacity=".35"/><path d="M-6.400 -24L0 -20.800L6.400 -24"/><path d="M-6.400 -21L0 -17.800L6.400 -21"/></g><circle cx="10.600" cy="-32.400" r="7.800" fill="#e0574c"/><text x="10.600" y="-28.100" text-anchor="middle" font-size="12.500" fill="#fff" stroke="#fff" stroke-width=".350">2</text></g>
<g transform="translate(607.3 322.3)"><path d="M0 0C-6.300 -5.500 -12.900 -11.500 -12.900 -22.600A12.900 12.900 0 1 1 12.900 -22.600C12.900 -11.500 6.300 -5.500 0 0Z" fill="#d750cd" stroke="#220c20" stroke-width="1.500"/><g transform="translate(0 0.800) scale(.840)" fill="none" stroke="#fff" stroke-width="1.450" stroke-linejoin="round" opacity=".9"><path d="M0 -30.200L6.400 -27L0 -23.800L-6.400 -27Z" fill="#fff" fill-opacity=".35"/><path d="M-6.400 -24L0 -20.800L6.400 -24"/><path d="M-6.400 -21L0 -17.800L6.400 -21"/></g><circle cx="10.600" cy="-32.400" r="7.800" fill="#e0574c"/><text x="10.600" y="-28.100" text-anchor="middle" font-size="12.500" fill="#fff" stroke="#fff" stroke-width=".350">2</text></g>
<g transform="translate(656.2 346.6)"><path d="M0 0C-6.300 -5.500 -12.900 -11.500 -12.900 -22.600A12.900 12.900 0 1 1 12.900 -22.600C12.900 -11.500 6.300 -5.500 0 0Z" fill="#d750cd" stroke="#220c20" stroke-width="1.500"/><g transform="translate(0 0.800) scale(.840)" fill="none" stroke="#fff" stroke-width="1.450" stroke-linejoin="round" opacity=".9"><path d="M0 -30.200L6.400 -27L0 -23.800L-6.400 -27Z" fill="#fff" fill-opacity=".35"/><path d="M-6.400 -24L0 -20.800L6.400 -24"/><path d="M-6.400 -21L0 -17.800L6.400 -21"/></g><circle cx="10.600" cy="-32.400" r="7.800" fill="#e0574c"/><text x="10.600" y="-28.100" text-anchor="middle" font-size="12.500" fill="#fff" stroke="#fff" stroke-width=".350">3</text></g>
<g transform="translate(714.9 354.2)"><path d="M0 0C-6.300 -5.500 -12.900 -11.500 -12.900 -22.600A12.900 12.900 0 1 1 12.900 -22.600C12.900 -11.500 6.300 -5.500 0 0Z" fill="#7a2576" stroke="#130512" stroke-width="1.500"/></g>
<g transform="translate(712.4 353.1)"><path d="M0 0C-6.300 -5.500 -12.900 -11.500 -12.900 -22.600A12.900 12.900 0 1 1 12.900 -22.600C12.900 -11.500 6.300 -5.500 0 0Z" fill="#d750cd" stroke="#220c20" stroke-width="1.500"/><text x="0" y="-11.900" text-anchor="middle" font-size="18" fill="#fff" fill-opacity=".95" stroke="#fff" stroke-width=".700" stroke-opacity=".9" letter-spacing="-0.100">6</text></g>
<g transform="translate(716.0 327.0)"><path d="M0 0C-6.300 -5.500 -12.900 -11.500 -12.900 -22.600A12.900 12.900 0 1 1 12.900 -22.600C12.900 -11.500 6.300 -5.500 0 0Z" fill="#d750cd" stroke="#220c20" stroke-width="1.500"/><g transform="translate(0 0.800) scale(.840)" fill="none" stroke="#fff" stroke-width="1.450" stroke-linejoin="round" opacity=".9"><path d="M0 -30.200L6.400 -27L0 -23.800L-6.400 -27Z" fill="#fff" fill-opacity=".35"/><path d="M-6.400 -24L0 -20.800L6.400 -24"/><path d="M-6.400 -21L0 -17.800L6.400 -21"/></g><circle cx="10.600" cy="-32.400" r="7.800" fill="#e0574c"/><text x="10.600" y="-28.100" text-anchor="middle" font-size="12.500" fill="#fff" stroke="#fff" stroke-width=".350">6</text></g>
<g transform="translate(745.7 382.1)"><path d="M0 0C-6.300 -5.500 -12.900 -11.500 -12.900 -22.600A12.900 12.900 0 1 1 12.900 -22.600C12.900 -11.500 6.300 -5.500 0 0Z" fill="#d750cd" stroke="#220c20" stroke-width="1.500"/><text x="0" y="-11.900" text-anchor="middle" font-size="18" fill="#fff" fill-opacity=".95" stroke="#fff" stroke-width=".700" stroke-opacity=".9" letter-spacing="-0.100">1</text></g>
<g transform="translate(860.9 402.8)"><path d="M0 0C-6.300 -5.500 -12.900 -11.500 -12.900 -22.600A12.900 12.900 0 1 1 12.900 -22.600C12.900 -11.500 6.300 -5.500 0 0Z" fill="#d750cd" stroke="#220c20" stroke-width="1.500"/><text x="0" y="-11.900" text-anchor="middle" font-size="18" fill="#fff" fill-opacity=".95" stroke="#fff" stroke-width=".700" stroke-opacity=".9" letter-spacing="-0.100">2</text></g>
<g transform="translate(868.6 424.1)"><path d="M0 0C-6.300 -5.500 -12.900 -11.500 -12.900 -22.600A12.900 12.900 0 1 1 12.900 -22.600C12.900 -11.500 6.300 -5.500 0 0Z" fill="#7a2576" stroke="#130512" stroke-width="1.500"/></g>
<g transform="translate(867.1 423.1)"><path d="M0 0C-6.300 -5.500 -12.900 -11.500 -12.900 -22.600A12.900 12.900 0 1 1 12.900 -22.600C12.900 -11.500 6.300 -5.500 0 0Z" fill="#d750cd" stroke="#220c20" stroke-width="1.500"/><text x="0" y="-11.900" text-anchor="middle" font-size="18" fill="#fff" fill-opacity=".95" stroke="#fff" stroke-width=".700" stroke-opacity=".9" letter-spacing="-0.100">4</text></g>
<g transform="translate(464.2 522.3)"><path d="M0 0C-6.300 -5.500 -12.900 -11.500 -12.900 -22.600A12.900 12.900 0 1 1 12.900 -22.600C12.900 -11.500 6.300 -5.500 0 0Z" fill="#4fb592" stroke="#0c1c17" stroke-width="1.500"/></g>
<g transform="translate(470.4 521.5)"><path d="M0 0C-6.300 -5.500 -12.900 -11.500 -12.900 -22.600A12.900 12.900 0 1 1 12.900 -22.600C12.900 -11.500 6.300 -5.500 0 0Z" fill="#4fb592" stroke="#0c1c17" stroke-width="1.500"/><text x="0" y="-11.900" text-anchor="middle" font-size="18" fill="#fff" fill-opacity=".95" stroke="#fff" stroke-width=".700" stroke-opacity=".9" letter-spacing="-0.100">15</text></g>
<g transform="translate(562.0 608.6)"><path d="M0 0C-6.300 -5.500 -12.900 -11.500 -12.900 -22.600A12.900 12.900 0 1 1 12.900 -22.600C12.900 -11.500 6.300 -5.500 0 0Z" fill="#4fb592" stroke="#0c1c17" stroke-width="1.500"/><text x="0" y="-11.900" text-anchor="middle" font-size="18" fill="#fff" fill-opacity=".95" stroke="#fff" stroke-width=".700" stroke-opacity=".9" letter-spacing="-0.100">13</text></g>
<g transform="translate(609.1 617.6)"><path d="M0 0C-6.300 -5.500 -12.900 -11.500 -12.900 -22.600A12.900 12.900 0 1 1 12.900 -22.600C12.900 -11.500 6.300 -5.500 0 0Z" fill="#4fb592" stroke="#0c1c17" stroke-width="1.500"/><text x="0" y="-11.900" text-anchor="middle" font-size="18" fill="#fff" fill-opacity=".95" stroke="#fff" stroke-width=".700" stroke-opacity=".9" letter-spacing="-0.100">9</text></g>
<g transform="translate(597.2 619.4)"><path d="M0 0C-6.300 -5.500 -12.900 -11.500 -12.900 -22.600A12.900 12.900 0 1 1 12.900 -22.600C12.900 -11.500 6.300 -5.500 0 0Z" fill="#4fb592" stroke="#0c1c17" stroke-width="1.500"/><text x="0" y="-11.900" text-anchor="middle" font-size="18" fill="#fff" fill-opacity=".95" stroke="#fff" stroke-width=".700" stroke-opacity=".9" letter-spacing="-0.100">12</text></g>
<g transform="translate(609.1 588.6)"><path d="M0 0C-6.300 -5.500 -12.900 -11.500 -12.900 -22.600A12.900 12.900 0 1 1 12.900 -22.600C12.900 -11.500 6.300 -5.500 0 0Z" fill="#4fb592" stroke="#0c1c17" stroke-width="1.500"/></g>
<g transform="translate(614.0 585.0)"><path d="M0 0C-6.300 -5.500 -12.900 -11.500 -12.900 -22.600A12.900 12.900 0 1 1 12.900 -22.600C12.900 -11.500 6.300 -5.500 0 0Z" fill="#4fb592" stroke="#0c1c17" stroke-width="1.500"/><g transform="translate(0 0.800) scale(.840)" fill="none" stroke="#fff" stroke-width="1.450" stroke-linejoin="round" opacity=".9"><path d="M0 -30.200L6.400 -27L0 -23.800L-6.400 -27Z" fill="#fff" fill-opacity=".35"/><path d="M-6.400 -24L0 -20.800L6.400 -24"/><path d="M-6.400 -21L0 -17.800L6.400 -21"/></g><circle cx="10.600" cy="-32.400" r="7.800" fill="#e0574c"/><text x="10.600" y="-28.100" text-anchor="middle" font-size="12.500" fill="#fff" stroke="#fff" stroke-width=".350">5</text></g>
<g transform="translate(615.7 595.9)"><path d="M0 0C-6.300 -5.500 -12.900 -11.500 -12.900 -22.600A12.900 12.900 0 1 1 12.900 -22.600C12.900 -11.500 6.300 -5.500 0 0Z" fill="#4fb592" stroke="#0c1c17" stroke-width="1.500"/><g transform="translate(0 0.800) scale(.840)" fill="none" stroke="#fff" stroke-width="1.450" stroke-linejoin="round" opacity=".9"><path d="M0 -30.200L6.400 -27L0 -23.800L-6.400 -27Z" fill="#fff" fill-opacity=".35"/><path d="M-6.400 -24L0 -20.800L6.400 -24"/><path d="M-6.400 -21L0 -17.800L6.400 -21"/></g><circle cx="10.600" cy="-32.400" r="7.800" fill="#e0574c"/><text x="10.600" y="-28.100" text-anchor="middle" font-size="12.500" fill="#fff" stroke="#fff" stroke-width=".350">3</text></g>
<g transform="translate(653.3 539.0)"><path d="M0 0C-6.300 -5.500 -12.900 -11.500 -12.900 -22.600A12.900 12.900 0 1 1 12.900 -22.600C12.900 -11.500 6.300 -5.500 0 0Z" fill="#4b70e0" stroke="#0c1123" stroke-width="1.500"/><g transform="translate(0 0.800) scale(.840)" fill="none" stroke="#fff" stroke-width="1.450" stroke-linejoin="round" opacity=".9"><path d="M0 -30.200L6.400 -27L0 -23.800L-6.400 -27Z" fill="#fff" fill-opacity=".35"/><path d="M-6.400 -24L0 -20.800L6.400 -24"/><path d="M-6.400 -21L0 -17.800L6.400 -21"/></g><circle cx="10.600" cy="-32.400" r="7.800" fill="#e0574c"/><text x="10.600" y="-28.100" text-anchor="middle" font-size="12.500" fill="#fff" stroke="#fff" stroke-width=".350">2</text></g>
<g transform="translate(682.3 570.5)"><path d="M0 0C-6.300 -5.500 -12.900 -11.500 -12.900 -22.600A12.900 12.900 0 1 1 12.900 -22.600C12.900 -11.500 6.300 -5.500 0 0Z" fill="#4b70e0" stroke="#0c1123" stroke-width="1.500"/><text x="0" y="-11.900" text-anchor="middle" font-size="18" fill="#fff" fill-opacity=".95" stroke="#fff" stroke-width=".700" stroke-opacity=".9" letter-spacing="-0.100">5</text></g>
<g transform="translate(667.8 553.5)"><path d="M0 0C-6.300 -5.500 -12.900 -11.500 -12.900 -22.600A12.900 12.900 0 1 1 12.900 -22.600C12.900 -11.500 6.300 -5.500 0 0Z" fill="#4b70e0" stroke="#0c1123" stroke-width="1.500"/><g transform="translate(0 0.800) scale(.840)" fill="none" stroke="#fff" stroke-width="1.450" stroke-linejoin="round" opacity=".9"><path d="M0 -30.200L6.400 -27L0 -23.800L-6.400 -27Z" fill="#fff" fill-opacity=".35"/><path d="M-6.400 -24L0 -20.800L6.400 -24"/><path d="M-6.400 -21L0 -17.800L6.400 -21"/></g><circle cx="10.600" cy="-32.400" r="7.800" fill="#e0574c"/><text x="10.600" y="-28.100" text-anchor="middle" font-size="12.500" fill="#fff" stroke="#fff" stroke-width=".350">2</text></g>
<g transform="translate(662.8 576.0)"><path d="M0 0C-6.300 -5.500 -12.900 -11.500 -12.900 -22.600A12.900 12.900 0 1 1 12.900 -22.600C12.900 -11.500 6.300 -5.500 0 0Z" fill="#4b70e0" stroke="#0c1123" stroke-width="1.500"/><g transform="translate(0 0.800) scale(.840)" fill="none" stroke="#fff" stroke-width="1.450" stroke-linejoin="round" opacity=".9"><path d="M0 -30.200L6.400 -27L0 -23.800L-6.400 -27Z" fill="#fff" fill-opacity=".35"/><path d="M-6.400 -24L0 -20.800L6.400 -24"/><path d="M-6.400 -21L0 -17.800L6.400 -21"/></g></g>
<g transform="translate(693.6 585.7)"><path d="M0 0C-6.300 -5.500 -12.900 -11.500 -12.900 -22.600A12.900 12.900 0 1 1 12.900 -22.600C12.900 -11.500 6.300 -5.500 0 0Z" fill="#4b70e0" stroke="#0c1123" stroke-width="1.500"/><text x="0" y="-11.900" text-anchor="middle" font-size="18" fill="#fff" fill-opacity=".95" stroke="#fff" stroke-width=".700" stroke-opacity=".9" letter-spacing="-0.100">24</text></g>
<g transform="translate(672.5 795.4)"><path d="M0 0C-6.300 -5.500 -12.900 -11.500 -12.900 -22.600A12.900 12.900 0 1 1 12.900 -22.600C12.900 -11.500 6.300 -5.500 0 0Z" fill="#4b70e0" stroke="#0c1123" stroke-width="1.500"/></g>
<g transform="translate(675.1 801.9)"><path d="M0 0C-6.300 -5.500 -12.900 -11.500 -12.900 -22.600A12.900 12.900 0 1 1 12.900 -22.600C12.900 -11.500 6.300 -5.500 0 0Z" fill="#4b70e0" stroke="#0c1123" stroke-width="1.500"/></g>
<g transform="translate(678.7 808.1)"><path d="M0 0C-6.300 -5.500 -12.900 -11.500 -12.900 -22.600A12.900 12.900 0 1 1 12.900 -22.600C12.900 -11.500 6.300 -5.500 0 0Z" fill="#4b70e0" stroke="#0c1123" stroke-width="1.500"/></g>
<g transform="translate(685.9 775.5)"><path d="M0 0C-6.300 -5.500 -12.900 -11.500 -12.900 -22.600A12.900 12.900 0 1 1 12.900 -22.600C12.900 -11.500 6.300 -5.500 0 0Z" fill="#4b70e0" stroke="#0c1123" stroke-width="1.500"/><g transform="translate(0 0.800) scale(.840)" fill="none" stroke="#fff" stroke-width="1.450" stroke-linejoin="round" opacity=".9"><path d="M0 -30.200L6.400 -27L0 -23.800L-6.400 -27Z" fill="#fff" fill-opacity=".35"/><path d="M-6.400 -24L0 -20.800L6.400 -24"/><path d="M-6.400 -21L0 -17.800L6.400 -21"/></g><circle cx="10.600" cy="-32.400" r="7.800" fill="#e0574c"/><text x="10.600" y="-28.100" text-anchor="middle" font-size="12.500" fill="#fff" stroke="#fff" stroke-width=".350">3</text></g>
<g transform="translate(687.0 799.8)"><path d="M0 0C-6.300 -5.500 -12.900 -11.500 -12.900 -22.600A12.900 12.900 0 1 1 12.900 -22.600C12.900 -11.500 6.300 -5.500 0 0Z" fill="#4b70e0" stroke="#0c1123" stroke-width="1.500"/><g transform="translate(0 0.800) scale(.840)" fill="none" stroke="#fff" stroke-width="1.450" stroke-linejoin="round" opacity=".9"><path d="M0 -30.200L6.400 -27L0 -23.800L-6.400 -27Z" fill="#fff" fill-opacity=".35"/><path d="M-6.400 -24L0 -20.800L6.400 -24"/><path d="M-6.400 -21L0 -17.800L6.400 -21"/></g><circle cx="10.600" cy="-32.400" r="7.800" fill="#e0574c"/><text x="10.600" y="-28.100" text-anchor="middle" font-size="12.500" fill="#fff" stroke="#fff" stroke-width=".350">2</text></g>
<g transform="translate(964.9 801.9)"><path d="M0 0C-6.300 -5.500 -12.900 -11.500 -12.900 -22.600A12.900 12.900 0 1 1 12.900 -22.600C12.900 -11.500 6.300 -5.500 0 0Z" fill="#4b70e0" stroke="#0c1123" stroke-width="1.500"/><text x="0" y="-11.900" text-anchor="middle" font-size="18" fill="#fff" fill-opacity=".95" stroke="#fff" stroke-width=".700" stroke-opacity=".9" letter-spacing="-0.100">23</text></g>
<g transform="translate(775.1 883.1)"><path d="M0 0C-6.300 -5.500 -12.900 -11.500 -12.900 -22.600A12.900 12.900 0 1 1 12.900 -22.600C12.900 -11.500 6.300 -5.500 0 0Z" fill="#4b70e0" stroke="#0c1123" stroke-width="1.500"/><text x="0" y="-11.900" text-anchor="middle" font-size="18" fill="#fff" fill-opacity=".95" stroke="#fff" stroke-width=".700" stroke-opacity=".9" letter-spacing="-0.100">22</text></g>
<g transform="translate(758.4 909.6)"><path d="M0 0C-6.300 -5.500 -12.900 -11.500 -12.900 -22.600A12.900 12.900 0 1 1 12.900 -22.600C12.900 -11.500 6.300 -5.500 0 0Z" fill="#4b70e0" stroke="#0c1123" stroke-width="1.500"/><text x="0" y="-11.900" text-anchor="middle" font-size="18" fill="#fff" fill-opacity=".95" stroke="#fff" stroke-width=".700" stroke-opacity=".9" letter-spacing="-0.100">21</text></g><g><rect x="1015.500" y="666.500" width="47" height="96" rx="1" fill="#fff" filter="url(#zs)"/><path d="M1023 714.500H1055" stroke="#e6e6e6" stroke-width="1"/><path d="M1029.500 689.500H1048.500M1039 680V699M1029.500 739.500H1048.500" stroke="#666" stroke-width="2.200" fill="none"/></g></svg></div>
<div id="panel"></div>
<div style="left:1036.5px;top:239.5px;width:38.5px;height:59.5px;background:#2f6db3;border-radius:0 0 0 2px;z-index:3;box-shadow:-1px 1px 5px rgba(0,0,0,.2)"></div>
<svg style="z-index:3;left:1048px;top:256px" width="16" height="26" viewBox="0 0 16 26" ><path d="M2.600 2.400V23.600L13.400 13Z" fill="none" stroke="#fff" stroke-width="2" stroke-linejoin="round"/></svg>
<div style="left:1087.6px;top:249.2px;width:165px;height:37.2px;background:#f0f0f0;border-radius:3px"></div>
<span class="t" style="left:1099.5px;top:260.0px;font-size:15px;color:#6a6a6a;letter-spacing:0.50px;">Filter the display</span>
<svg style="left:1227px;top:263px" width="14" height="10" viewBox="0 0 14 10" ><path d="M2 2.600L7 7.400L12 2.600" fill="none" stroke="#666" stroke-width="1.300" stroke-linecap="round" stroke-linejoin="round"/></svg>
<div style="left:1085.4px;top:297px;width:755.8px;height:71.2px;background:#2f6db3"></div>
<div style="left:1117.2px;top:321.6px;width:21.6px;height:21.6px;background:#4a90e2;border-radius:2px"></div>
<svg style="left:1117.2px;top:321.6px" width="21.6" height="21.6" viewBox="0 0 22 22" ><path d="M4.600 11.400L9 15.800L17.400 6.800" fill="none" stroke="#fff" stroke-width="2.300" stroke-linecap="round" stroke-linejoin="round"/></svg>
<span class="t" style="left:1156.2px;top:324.5px;font-size:15px;color:#fff;font-weight:bold;">Deliverymen out of sector</span>
<svg style="left:1800px;top:323px" width="16" height="12" viewBox="0 0 16 12" ><path d="M2.200 9.400L8 3.400L13.800 9.400" fill="none" stroke="#fff" stroke-width="2.100" stroke-linecap="round" stroke-linejoin="round"/></svg>
<div style="left:1087.3px;top:378.5px;width:752.4px;height:95.8px;border:1px solid #e0e0e0;background:#fff"></div>
<div style="left:1088.3px;top:379.5px;width:750.4px;height:44px;background:#f0f0f0"></div>
<div style="left:1098.3px;top:390.0px;width:22px;height:22px;background:#4a90e2;border-radius:2.500px"></div>
<svg style="left:1098.3px;top:390.0px" width="22" height="22" viewBox="0 0 22 22" ><path d="M4.600 11.400L9 15.800L17.400 6.800" fill="none" stroke="#fff" stroke-width="2.300" stroke-linecap="round" stroke-linejoin="round"/></svg>
<div style="left:1130.6px;top:388.7px;width:24.4px;height:24.4px;background:#dd4fcf;border-radius:50%;border:1.500px solid #1c1026"></div>
<span class="t" style="left:1164.4px;top:393.8px;font-size:14.5px;color:#1c1c1c;letter-spacing:0.54px;">Alexandre Sanchez | v4</span>
<div style="left:1654.2px;top:390.0px;width:98.2px;height:22px;background:#f5ecd6;border-radius:3px"></div>
<span class="t" style="left:1661.9px;top:395.1px;font-size:11.5px;color:#f2c24e;letter-spacing:0.29px;font-weight:bold;">NOT STARTED</span>
<div style="left:1792.55px;top:399.25px;width:2.9px;height:2.9px;background:#1c1c1c;border-radius:50%"></div>
<div style="left:1799.55px;top:399.25px;width:2.9px;height:2.9px;background:#1c1c1c;border-radius:50%"></div>
<div style="left:1806.55px;top:399.25px;width:2.9px;height:2.9px;background:#1c1c1c;border-radius:50%"></div>
<svg style="left:1107.5px;top:440.2px" width="18" height="19" viewBox="0 0 18 19" ><g fill="none" stroke="#666" stroke-width="1.25" stroke-linejoin="round"><path d="M1.2 0.6V18.4" stroke-linecap="round"/><path d="M1.2 1.400H8.800V11H1.200"/><path d="M8.800 3.600H16.800V13H8.800"/></g></svg>
<span class="t" style="left:1129.2px;top:442.8px;font-size:12px;color:#707070;letter-spacing:0.64px;">8:00 AM</span>
<svg style="left:1217.3px;top:439.7px" width="18" height="19" viewBox="0 0 18 19" ><g fill="#666"><rect x="1.4" y="0.80" width="3.1" height="2.650"/><rect x="7.6" y="0.80" width="3.1" height="2.650"/><rect x="13.8" y="0.80" width="3.1" height="2.650"/><rect x="4.5" y="3.45" width="3.1" height="2.650"/><rect x="10.7" y="3.45" width="3.1" height="2.650"/><rect x="1.4" y="6.10" width="3.1" height="2.650"/><rect x="7.6" y="6.10" width="3.1" height="2.650"/><rect x="13.8" y="6.10" width="3.1" height="2.650"/><rect x="4.5" y="8.75" width="3.1" height="2.650"/><rect x="10.7" y="8.75" width="3.1" height="2.650"/></g><g fill="none" stroke="#666" stroke-width="1.25"><path d="M1.3 0.4V17.800" stroke-linecap="round"/><rect x="1.4" y="0.800" width="15.500" height="10.600"/></g></svg>
<span class="t" style="left:1238.5px;top:442.8px;font-size:12px;color:#707070;letter-spacing:-0.08px;">4:51 PM</span>
<svg style="left:1314.7px;top:440.2px" width="23" height="16" viewBox="0 0 23 16" ><g fill="none" stroke="#666" stroke-width="1.25" stroke-linejoin="round"><path d="M6 1.2H17L22 14.800H1Z"/><path d="M11.500 1.200V4.200M11.500 6.400V9M11.500 11.400V14.800"/></g></svg>
<span class="t" style="left:1343.3px;top:442.8px;font-size:12px;color:#707070;letter-spacing:0.58px;">26.34 km</span>
<svg style="left:1447.5px;top:439.3px" width="14" height="20" viewBox="0 0 14 20" ><g fill="none" stroke="#666" stroke-width="1.25" stroke-linejoin="round"><path d="M7 18.800C3.600 14.200 1 10.600 1 7A6 6 0 0 1 13 7C13 10.600 10.400 14.200 7 18.800Z"/></g><circle cx="7" cy="6.800" r="1.400" fill="#666"/></svg>
<span class="t" style="left:1471.2px;top:442.8px;font-size:12px;color:#707070;letter-spacing:0.08px;">32</span>
<svg style="left:1540.8px;top:439.9px" width="20" height="17" viewBox="0 0 20 17" ><g fill="none" stroke="#666" stroke-width="1.25" stroke-linejoin="round" stroke-linecap="round"><path d="M3 6.400L4.600 1.800C4.800 1.200 5.200 1 5.800 1H14.200C14.800 1 15.200 1.200 15.400 1.800L17 6.400"/><path d="M1.800 6.400H18.200V15.600H15V13.600H5V15.600H1.800Z"/><path d="M0.600 5.600H2.400M17.600 5.600H19.400"/><path d="M4 9.400L6.400 10M16 9.400L13.600 10M8 11.600H12"/></g></svg>
<span class="t" style="left:1567.8px;top:442.8px;font-size:12px;color:#707070;letter-spacing:0.38px;">51min</span>
<svg style="left:1659.6px;top:439.5px" width="16" height="17" viewBox="0 0 17 18" ><g fill="none" stroke="#666" stroke-width="1.350" stroke-linecap="round"><ellipse cx="8.500" cy="6" rx="4.600" ry="5.200"/><path d="M1 17.200C1.400 13.400 3.200 11.400 5.600 10.400"/><path d="M16 17.200C15.600 13.400 13.800 11.400 11.400 10.400"/><path d="M5 12.600C7 14.200 10 14.200 12 12.600"/></g></svg>
<span class="t" style="left:1684.5px;top:442.8px;font-size:12px;color:#707070;letter-spacing:0.98px;">8h</span>
<svg style="left:1754.1px;top:438.7px" width="20" height="20" viewBox="0 0 20 20" ><g fill="none" stroke="#666" stroke-width="1.25" stroke-linecap="round" stroke-linejoin="round"><circle cx="10" cy="10" r="9.100"/><path d="M10 5.400V14.400M6.400 11L10 14.600L13.600 11"/></g></svg>
<span class="t" style="left:1781.8px;top:442.8px;font-size:12px;color:#707070;letter-spacing:-0.05px;">€23.71</span>
<div style="left:1087.3px;top:484.5px;width:752.4px;height:95.8px;border:1px solid #e0e0e0;background:#fff"></div>
<div style="left:1088.3px;top:485.5px;width:750.4px;height:44px;background:#f0f0f0"></div>
<div style="left:1098.3px;top:496.25px;width:22px;height:22px;background:#4a90e2;border-radius:2.500px"></div>
<svg style="left:1098.3px;top:496.25px" width="22" height="22" viewBox="0 0 22 22" ><path d="M4.600 11.400L9 15.800L17.400 6.800" fill="none" stroke="#fff" stroke-width="2.300" stroke-linecap="round" stroke-linejoin="round"/></svg>
<div style="left:1130.6px;top:494.95px;width:24.4px;height:24.4px;background:#a07be8;border-radius:50%;border:1.500px solid #1c1026"></div>
<span class="t" style="left:1164.4px;top:500.0px;font-size:14.5px;color:#1c1c1c;letter-spacing:0.50px;">Julia Virmond | v1</span>
<div style="left:1654.2px;top:496.25px;width:98.2px;height:22px;background:#f5ecd6;border-radius:3px"></div>
<span class="t" style="left:1661.9px;top:501.4px;font-size:11.5px;color:#f2c24e;letter-spacing:0.29px;font-weight:bold;">NOT STARTED</span>
<div style="left:1792.55px;top:505.5px;width:2.9px;height:2.9px;background:#1c1c1c;border-radius:50%"></div>
<div style="left:1799.55px;top:505.5px;width:2.9px;height:2.9px;background:#1c1c1c;border-radius:50%"></div>
<div style="left:1806.55px;top:505.5px;width:2.9px;height:2.9px;background:#1c1c1c;border-radius:50%"></div>
<svg style="left:1107.5px;top:546.5px" width="18" height="19" viewBox="0 0 18 19" ><g fill="none" stroke="#666" stroke-width="1.25" stroke-linejoin="round"><path d="M1.2 0.6V18.4" stroke-linecap="round"/><path d="M1.2 1.400H8.800V11H1.200"/><path d="M8.800 3.600H16.800V13H8.800"/></g></svg>
<span class="t" style="left:1129.2px;top:549.0px;font-size:12px;color:#707070;letter-spacing:0.64px;">8:00 AM</span>
<svg style="left:1217.3px;top:546.0px" width="18" height="19" viewBox="0 0 18 19" ><g fill="#666"><rect x="1.4" y="0.80" width="3.1" height="2.650"/><rect x="7.6" y="0.80" width="3.1" height="2.650"/><rect x="13.8" y="0.80" width="3.1" height="2.650"/><rect x="4.5" y="3.45" width="3.1" height="2.650"/><rect x="10.7" y="3.45" width="3.1" height="2.650"/><rect x="1.4" y="6.10" width="3.1" height="2.650"/><rect x="7.6" y="6.10" width="3.1" height="2.650"/><rect x="13.8" y="6.10" width="3.1" height="2.650"/><rect x="4.5" y="8.75" width="3.1" height="2.650"/><rect x="10.7" y="8.75" width="3.1" height="2.650"/></g><g fill="none" stroke="#666" stroke-width="1.25"><path d="M1.3 0.4V17.800" stroke-linecap="round"/><rect x="1.4" y="0.800" width="15.500" height="10.600"/></g></svg>
<span class="t" style="left:1238.5px;top:549.0px;font-size:12px;color:#707070;letter-spacing:-0.08px;">4:51 PM</span>
<svg style="left:1318.1px;top:546.5px" width="23" height="16" viewBox="0 0 23 16" ><g fill="none" stroke="#666" stroke-width="1.25" stroke-linejoin="round"><path d="M6 1.2H17L22 14.800H1Z"/><path d="M11.500 1.200V4.200M11.500 6.400V9M11.500 11.400V14.800"/></g></svg>
<span class="t" style="left:1346.7px;top:549.0px;font-size:12px;color:#707070;letter-spacing:0.64px;">8.38 km</span>
<svg style="left:1447.5px;top:545.5px" width="14" height="20" viewBox="0 0 14 20" ><g fill="none" stroke="#666" stroke-width="1.25" stroke-linejoin="round"><path d="M7 18.800C3.600 14.200 1 10.600 1 7A6 6 0 0 1 13 7C13 10.600 10.400 14.200 7 18.800Z"/></g><circle cx="7" cy="6.800" r="1.400" fill="#666"/></svg>
<span class="t" style="left:1471.2px;top:549.0px;font-size:12px;color:#707070;letter-spacing:0.08px;">33</span>
<svg style="left:1540.4px;top:546.1px" width="20" height="17" viewBox="0 0 20 17" ><g fill="none" stroke="#666" stroke-width="1.25" stroke-linejoin="round" stroke-linecap="round"><path d="M3 6.400L4.600 1.800C4.800 1.200 5.200 1 5.800 1H14.200C14.800 1 15.200 1.200 15.400 1.800L17 6.400"/><path d="M1.800 6.400H18.200V15.600H15V13.600H5V15.600H1.800Z"/><path d="M0.600 5.600H2.400M17.600 5.600H19.400"/><path d="M4 9.400L6.400 10M16 9.400L13.600 10M8 11.600H12"/></g></svg>
<span class="t" style="left:1567.5px;top:549.0px;font-size:12px;color:#707070;letter-spacing:0.52px;">16min</span>
<svg style="left:1654.3px;top:545.8px" width="16" height="17" viewBox="0 0 17 18" ><g fill="none" stroke="#666" stroke-width="1.350" stroke-linecap="round"><ellipse cx="8.500" cy="6" rx="4.600" ry="5.200"/><path d="M1 17.200C1.400 13.400 3.200 11.400 5.600 10.400"/><path d="M16 17.200C15.600 13.400 13.800 11.400 11.400 10.400"/><path d="M5 12.600C7 14.200 10 14.200 12 12.600"/></g></svg>
<span class="t" style="left:1679.2px;top:549.0px;font-size:12px;color:#707070;letter-spacing:-0.20px;">8h15</span>
<svg style="left:1752.2px;top:545.0px" width="20" height="20" viewBox="0 0 20 20" ><g fill="none" stroke="#666" stroke-width="1.25" stroke-linecap="round" stroke-linejoin="round"><circle cx="10" cy="10" r="9.100"/><path d="M10 5.400V14.400M6.400 11L10 14.600L13.600 11"/></g></svg>
<span class="t" style="left:1779.9px;top:549.0px;font-size:12px;color:#707070;letter-spacing:-0.44px;">€561.13</span>
<div style="left:1087.3px;top:591.0px;width:752.4px;height:95.8px;border:1px solid #e0e0e0;background:#fff"></div>
<div style="left:1088.3px;top:592.0px;width:750.4px;height:44px;background:#f0f0f0"></div>
<div style="left:1098.3px;top:602.5px;width:22px;height:22px;background:#4a90e2;border-radius:2.500px"></div>
<svg style="left:1098.3px;top:602.5px" width="22" height="22" viewBox="0 0 22 22" ><path d="M4.600 11.400L9 15.800L17.400 6.800" fill="none" stroke="#fff" stroke-width="2.300" stroke-linecap="round" stroke-linejoin="round"/></svg>
<div style="left:1130.6px;top:601.1999999999999px;width:24.4px;height:24.4px;background:#f9d64f;border-radius:50%;border:1.500px solid #1c1026"></div>
<span class="t" style="left:1164.4px;top:606.2px;font-size:14.5px;color:#1c1c1c;letter-spacing:0.59px;">Marta Cubarsi | v6</span>
<div style="left:1654.2px;top:602.5px;width:98.2px;height:22px;background:#f5ecd6;border-radius:3px"></div>
<span class="t" style="left:1661.9px;top:607.6px;font-size:11.5px;color:#f2c24e;letter-spacing:0.29px;font-weight:bold;">NOT STARTED</span>
<div style="left:1792.55px;top:611.7499999999999px;width:2.9px;height:2.9px;background:#1c1c1c;border-radius:50%"></div>
<div style="left:1799.55px;top:611.7499999999999px;width:2.9px;height:2.9px;background:#1c1c1c;border-radius:50%"></div>
<div style="left:1806.55px;top:611.7499999999999px;width:2.9px;height:2.9px;background:#1c1c1c;border-radius:50%"></div>
<svg style="left:1107.5px;top:652.7px" width="18" height="19" viewBox="0 0 18 19" ><g fill="none" stroke="#666" stroke-width="1.25" stroke-linejoin="round"><path d="M1.2 0.6V18.4" stroke-linecap="round"/><path d="M1.2 1.400H8.800V11H1.200"/><path d="M8.800 3.600H16.800V13H8.800"/></g></svg>
<span class="t" style="left:1129.2px;top:655.3px;font-size:12px;color:#707070;letter-spacing:0.64px;">8:00 AM</span>
<svg style="left:1216.7px;top:652.2px" width="18" height="19" viewBox="0 0 18 19" ><g fill="#666"><rect x="1.4" y="0.80" width="3.1" height="2.650"/><rect x="7.6" y="0.80" width="3.1" height="2.650"/><rect x="13.8" y="0.80" width="3.1" height="2.650"/><rect x="4.5" y="3.45" width="3.1" height="2.650"/><rect x="10.7" y="3.45" width="3.1" height="2.650"/><rect x="1.4" y="6.10" width="3.1" height="2.650"/><rect x="7.6" y="6.10" width="3.1" height="2.650"/><rect x="13.8" y="6.10" width="3.1" height="2.650"/><rect x="4.5" y="8.75" width="3.1" height="2.650"/><rect x="10.7" y="8.75" width="3.1" height="2.650"/></g><g fill="none" stroke="#666" stroke-width="1.25"><path d="M1.3 0.4V17.800" stroke-linecap="round"/><rect x="1.4" y="0.800" width="15.500" height="10.600"/></g></svg>
<span class="t" style="left:1237.9px;top:655.3px;font-size:12px;color:#707070;letter-spacing:-0.55px;">11:17 AM</span>
<svg style="left:1315.6px;top:652.7px" width="23" height="16" viewBox="0 0 23 16" ><g fill="none" stroke="#666" stroke-width="1.25" stroke-linejoin="round"><path d="M6 1.2H17L22 14.800H1Z"/><path d="M11.500 1.200V4.200M11.500 6.400V9M11.500 11.400V14.800"/></g></svg>
<span class="t" style="left:1344.2px;top:655.3px;font-size:12px;color:#707070;letter-spacing:0.35px;">108.6 km</span>
<svg style="left:1450.5px;top:651.8px" width="14" height="20" viewBox="0 0 14 20" ><g fill="none" stroke="#666" stroke-width="1.25" stroke-linejoin="round"><path d="M7 18.800C3.600 14.200 1 10.600 1 7A6 6 0 0 1 13 7C13 10.600 10.400 14.200 7 18.800Z"/></g><circle cx="7" cy="6.800" r="1.400" fill="#666"/></svg>
<span class="t" style="left:1474.3px;top:655.3px;font-size:12px;color:#707070;letter-spacing:0.73px;">8</span>
<svg style="left:1546.4px;top:652.4px" width="20" height="17" viewBox="0 0 20 17" ><g fill="none" stroke="#666" stroke-width="1.25" stroke-linejoin="round" stroke-linecap="round"><path d="M3 6.400L4.600 1.800C4.800 1.200 5.200 1 5.800 1H14.200C14.800 1 15.200 1.200 15.400 1.800L17 6.400"/><path d="M1.800 6.400H18.200V15.600H15V13.600H5V15.600H1.800Z"/><path d="M0.600 5.600H2.400M17.600 5.600H19.400"/><path d="M4 9.400L6.400 10M16 9.400L13.600 10M8 11.600H12"/></g></svg>
<span class="t" style="left:1573.5px;top:655.3px;font-size:12px;color:#707070;letter-spacing:-0.85px;">1h17</span>
<svg style="left:1660.0px;top:652.0px" width="16" height="17" viewBox="0 0 17 18" ><g fill="none" stroke="#666" stroke-width="1.350" stroke-linecap="round"><ellipse cx="8.500" cy="6" rx="4.600" ry="5.200"/><path d="M1 17.200C1.400 13.400 3.200 11.400 5.600 10.400"/><path d="M16 17.200C15.600 13.400 13.800 11.400 11.400 10.400"/><path d="M5 12.600C7 14.200 10 14.200 12 12.600"/></g></svg>
<span class="t" style="left:1685.0px;top:655.3px;font-size:12px;color:#707070;letter-spacing:0.58px;">2h</span>
<svg style="left:1751.8px;top:651.2px" width="20" height="20" viewBox="0 0 20 20" ><g fill="none" stroke="#666" stroke-width="1.25" stroke-linecap="round" stroke-linejoin="round"><circle cx="10" cy="10" r="9.100"/><path d="M10 5.400V14.400M6.400 11L10 14.600L13.600 11"/></g></svg>
<span class="t" style="left:1779.5px;top:655.3px;font-size:12px;color:#707070;letter-spacing:0.75px;">€43.44</span>
<div style="left:1087.3px;top:697.0px;width:752.4px;height:95.8px;border:1px solid #e0e0e0;background:#fff"></div>
<div style="left:1088.3px;top:698.0px;width:750.4px;height:44px;background:#f0f0f0"></div>
<div style="left:1098.3px;top:708.75px;width:22px;height:22px;background:#4a90e2;border-radius:2.500px"></div>
<svg style="left:1098.3px;top:708.75px" width="22" height="22" viewBox="0 0 22 22" ><path d="M4.600 11.400L9 15.800L17.400 6.800" fill="none" stroke="#fff" stroke-width="2.300" stroke-linecap="round" stroke-linejoin="round"/></svg>
<div style="left:1130.6px;top:707.4499999999999px;width:24.4px;height:24.4px;background:#c8d187;border-radius:50%;border:1.500px solid #1c1026"></div>
<span class="t" style="left:1164.4px;top:712.5px;font-size:14.5px;color:#1c1c1c;letter-spacing:0.65px;">Paul Wagner | v3</span>
<div style="left:1654.2px;top:708.75px;width:98.2px;height:22px;background:#f5ecd6;border-radius:3px"></div>
<span class="t" style="left:1661.9px;top:713.9px;font-size:11.5px;color:#f2c24e;letter-spacing:0.29px;font-weight:bold;">NOT STARTED</span>
<div style="left:1792.55px;top:717.9999999999999px;width:2.9px;height:2.9px;background:#1c1c1c;border-radius:50%"></div>
<div style="left:1799.55px;top:717.9999999999999px;width:2.9px;height:2.9px;background:#1c1c1c;border-radius:50%"></div>
<div style="left:1806.55px;top:717.9999999999999px;width:2.9px;height:2.9px;background:#1c1c1c;border-radius:50%"></div>
<svg style="left:1107.5px;top:759.0px" width="18" height="19" viewBox="0 0 18 19" ><g fill="none" stroke="#666" stroke-width="1.25" stroke-linejoin="round"><path d="M1.2 0.6V18.4" stroke-linecap="round"/><path d="M1.2 1.400H8.800V11H1.200"/><path d="M8.800 3.600H16.800V13H8.800"/></g></svg>
<span class="t" style="left:1129.2px;top:761.5px;font-size:12px;color:#707070;letter-spacing:0.64px;">8:00 AM</span>
<svg style="left:1215.4px;top:758.5px" width="18" height="19" viewBox="0 0 18 19" ><g fill="#666"><rect x="1.4" y="0.80" width="3.1" height="2.650"/><rect x="7.6" y="0.80" width="3.1" height="2.650"/><rect x="13.8" y="0.80" width="3.1" height="2.650"/><rect x="4.5" y="3.45" width="3.1" height="2.650"/><rect x="10.7" y="3.45" width="3.1" height="2.650"/><rect x="1.4" y="6.10" width="3.1" height="2.650"/><rect x="7.6" y="6.10" width="3.1" height="2.650"/><rect x="13.8" y="6.10" width="3.1" height="2.650"/><rect x="4.5" y="8.75" width="3.1" height="2.650"/><rect x="10.7" y="8.75" width="3.1" height="2.650"/></g><g fill="none" stroke="#666" stroke-width="1.25"><path d="M1.3 0.4V17.800" stroke-linecap="round"/><rect x="1.4" y="0.800" width="15.500" height="10.600"/></g></svg>
<span class="t" style="left:1236.6px;top:761.5px;font-size:12px;color:#707070;letter-spacing:0.46px;">4:07 PM</span>
<svg style="left:1321.4px;top:759.0px" width="23" height="16" viewBox="0 0 23 16" ><g fill="none" stroke="#666" stroke-width="1.25" stroke-linejoin="round"><path d="M6 1.2H17L22 14.800H1Z"/><path d="M11.500 1.200V4.200M11.500 6.400V9M11.500 11.400V14.800"/></g></svg>
<span class="t" style="left:1350.0px;top:761.5px;font-size:12px;color:#707070;letter-spacing:-0.19px;">5.11 km</span>
<svg style="left:1447.5px;top:758.0px" width="14" height="20" viewBox="0 0 14 20" ><g fill="none" stroke="#666" stroke-width="1.25" stroke-linejoin="round"><path d="M7 18.800C3.600 14.200 1 10.600 1 7A6 6 0 0 1 13 7C13 10.600 10.400 14.200 7 18.800Z"/></g><circle cx="7" cy="6.800" r="1.400" fill="#666"/></svg>
<span class="t" style="left:1471.2px;top:761.5px;font-size:12px;color:#707070;letter-spacing:0.08px;">32</span>
<svg style="left:1543.1px;top:758.6px" width="20" height="17" viewBox="0 0 20 17" ><g fill="none" stroke="#666" stroke-width="1.25" stroke-linejoin="round" stroke-linecap="round"><path d="M3 6.400L4.600 1.800C4.800 1.200 5.200 1 5.800 1H14.200C14.800 1 15.200 1.200 15.400 1.800L17 6.400"/><path d="M1.800 6.400H18.200V15.600H15V13.600H5V15.600H1.800Z"/><path d="M0.600 5.600H2.400M17.600 5.600H19.400"/><path d="M4 9.400L6.400 10M16 9.400L13.600 10M8 11.600H12"/></g></svg>
<span class="t" style="left:1570.2px;top:761.5px;font-size:12px;color:#707070;letter-spacing:0.97px;">7min</span>
<svg style="left:1659.6px;top:758.2px" width="16" height="17" viewBox="0 0 17 18" ><g fill="none" stroke="#666" stroke-width="1.350" stroke-linecap="round"><ellipse cx="8.500" cy="6" rx="4.600" ry="5.200"/><path d="M1 17.200C1.400 13.400 3.200 11.400 5.600 10.400"/><path d="M16 17.200C15.600 13.400 13.800 11.400 11.400 10.400"/><path d="M5 12.600C7 14.200 10 14.200 12 12.600"/></g></svg>
<span class="t" style="left:1684.5px;top:761.5px;font-size:12px;color:#707070;letter-spacing:0.98px;">8h</span>
<svg style="left:1755.0px;top:757.5px" width="20" height="20" viewBox="0 0 20 20" ><g fill="none" stroke="#666" stroke-width="1.25" stroke-linecap="round" stroke-linejoin="round"><circle cx="10" cy="10" r="9.100"/><path d="M10 5.400V14.400M6.400 11L10 14.600L13.600 11"/></g></svg>
<span class="t" style="left:1782.8px;top:761.5px;font-size:12px;color:#707070;letter-spacing:0.91px;">€4.60</span>
<div style="left:1087.3px;top:803.5px;width:752.4px;height:95.8px;border:1px solid #e0e0e0;background:#fff"></div>
<div style="left:1088.3px;top:804.5px;width:750.4px;height:44px;background:#f0f0f0"></div>
<div style="left:1098.3px;top:815.0px;width:22px;height:22px;background:#4a90e2;border-radius:2.500px"></div>
<svg style="left:1098.3px;top:815.0px" width="22" height="22" viewBox="0 0 22 22" ><path d="M4.600 11.400L9 15.800L17.400 6.800" fill="none" stroke="#fff" stroke-width="2.300" stroke-linecap="round" stroke-linejoin="round"/></svg>
<div style="left:1130.6px;top:813.6999999999999px;width:24.4px;height:24.4px;background:#55b896;border-radius:50%;border:1.500px solid #1c1026"></div>
<span class="t" style="left:1164.4px;top:818.8px;font-size:14.5px;color:#1c1c1c;letter-spacing:0.61px;">Pauline Henry | v5</span>
<div style="left:1654.2px;top:815.0px;width:98.2px;height:22px;background:#f5ecd6;border-radius:3px"></div>
<span class="t" style="left:1661.9px;top:820.1px;font-size:11.5px;color:#f2c24e;letter-spacing:0.29px;font-weight:bold;">NOT STARTED</span>
<div style="left:1792.55px;top:824.2499999999999px;width:2.9px;height:2.9px;background:#1c1c1c;border-radius:50%"></div>
<div style="left:1799.55px;top:824.2499999999999px;width:2.9px;height:2.9px;background:#1c1c1c;border-radius:50%"></div>
<div style="left:1806.55px;top:824.2499999999999px;width:2.9px;height:2.9px;background:#1c1c1c;border-radius:50%"></div>
<svg style="left:1107.5px;top:865.2px" width="18" height="19" viewBox="0 0 18 19" ><g fill="none" stroke="#666" stroke-width="1.25" stroke-linejoin="round"><path d="M1.2 0.6V18.4" stroke-linecap="round"/><path d="M1.2 1.400H8.800V11H1.200"/><path d="M8.800 3.600H16.800V13H8.800"/></g></svg>
<span class="t" style="left:1129.2px;top:867.8px;font-size:12px;color:#707070;letter-spacing:0.64px;">8:00 AM</span>
<svg style="left:1217.3px;top:864.7px" width="18" height="19" viewBox="0 0 18 19" ><g fill="#666"><rect x="1.4" y="0.80" width="3.1" height="2.650"/><rect x="7.6" y="0.80" width="3.1" height="2.650"/><rect x="13.8" y="0.80" width="3.1" height="2.650"/><rect x="4.5" y="3.45" width="3.1" height="2.650"/><rect x="10.7" y="3.45" width="3.1" height="2.650"/><rect x="1.4" y="6.10" width="3.1" height="2.650"/><rect x="7.6" y="6.10" width="3.1" height="2.650"/><rect x="13.8" y="6.10" width="3.1" height="2.650"/><rect x="4.5" y="8.75" width="3.1" height="2.650"/><rect x="10.7" y="8.75" width="3.1" height="2.650"/></g><g fill="none" stroke="#666" stroke-width="1.25"><path d="M1.3 0.4V17.800" stroke-linecap="round"/><rect x="1.4" y="0.800" width="15.500" height="10.600"/></g></svg>
<span class="t" style="left:1238.5px;top:867.8px;font-size:12px;color:#707070;letter-spacing:-0.08px;">4:31 PM</span>
<svg style="left:1315.6px;top:865.2px" width="23" height="16" viewBox="0 0 23 16" ><g fill="none" stroke="#666" stroke-width="1.25" stroke-linejoin="round"><path d="M6 1.2H17L22 14.800H1Z"/><path d="M11.500 1.200V4.200M11.500 6.400V9M11.500 11.400V14.800"/></g></svg>
<span class="t" style="left:1344.2px;top:867.8px;font-size:12px;color:#707070;letter-spacing:0.35px;">14.83 km</span>
<svg style="left:1447.5px;top:864.3px" width="14" height="20" viewBox="0 0 14 20" ><g fill="none" stroke="#666" stroke-width="1.25" stroke-linejoin="round"><path d="M7 18.800C3.600 14.200 1 10.600 1 7A6 6 0 0 1 13 7C13 10.600 10.400 14.200 7 18.800Z"/></g><circle cx="7" cy="6.800" r="1.400" fill="#666"/></svg>
<span class="t" style="left:1471.2px;top:867.8px;font-size:12px;color:#707070;letter-spacing:0.08px;">32</span>
<svg style="left:1540.8px;top:864.9px" width="20" height="17" viewBox="0 0 20 17" ><g fill="none" stroke="#666" stroke-width="1.25" stroke-linejoin="round" stroke-linecap="round"><path d="M3 6.400L4.600 1.800C4.800 1.200 5.200 1 5.800 1H14.200C14.800 1 15.200 1.200 15.400 1.800L17 6.400"/><path d="M1.800 6.400H18.200V15.600H15V13.600H5V15.600H1.800Z"/><path d="M0.600 5.600H2.400M17.600 5.600H19.400"/><path d="M4 9.400L6.400 10M16 9.400L13.600 10M8 11.600H12"/></g></svg>
<span class="t" style="left:1567.8px;top:867.8px;font-size:12px;color:#707070;letter-spacing:0.38px;">31min</span>
<svg style="left:1659.6px;top:864.5px" width="16" height="17" viewBox="0 0 17 18" ><g fill="none" stroke="#666" stroke-width="1.350" stroke-linecap="round"><ellipse cx="8.500" cy="6" rx="4.600" ry="5.200"/><path d="M1 17.200C1.400 13.400 3.200 11.400 5.600 10.400"/><path d="M16 17.200C15.600 13.400 13.800 11.400 11.400 10.400"/><path d="M5 12.600C7 14.200 10 14.200 12 12.600"/></g></svg>
<span class="t" style="left:1684.5px;top:867.8px;font-size:12px;color:#707070;letter-spacing:0.98px;">8h</span>
<svg style="left:1754.4px;top:863.7px" width="20" height="20" viewBox="0 0 20 20" ><g fill="none" stroke="#666" stroke-width="1.25" stroke-linecap="round" stroke-linejoin="round"><circle cx="10" cy="10" r="9.100"/><path d="M10 5.400V14.400M6.400 11L10 14.600L13.600 11"/></g></svg>
<span class="t" style="left:1782.1px;top:867.8px;font-size:12px;color:#707070;letter-spacing:-0.13px;">€13.35</span>
<div style="left:1087.3px;top:909.5px;width:752.4px;height:95.8px;border:1px solid #e0e0e0;background:#fff"></div>
<div style="left:1088.3px;top:910.5px;width:750.4px;height:44px;background:#f0f0f0"></div>
<div style="left:1098.3px;top:921.25px;width:22px;height:22px;background:#4a90e2;border-radius:2.500px"></div>
<svg style="left:1098.3px;top:921.25px" width="22" height="22" viewBox="0 0 22 22" ><path d="M4.600 11.400L9 15.800L17.400 6.800" fill="none" stroke="#fff" stroke-width="2.300" stroke-linecap="round" stroke-linejoin="round"/></svg>
<div style="left:1130.6px;top:919.9499999999999px;width:24.4px;height:24.4px;background:#5679e2;border-radius:50%;border:1.500px solid #1c1026"></div>
<span class="t" style="left:1164.4px;top:925.0px;font-size:14.5px;color:#1c1c1c;letter-spacing:0.70px;">Pierre Dupont | v2</span>
<div style="left:1654.2px;top:921.25px;width:98.2px;height:22px;background:#f5ecd6;border-radius:3px"></div>
<span class="t" style="left:1661.9px;top:926.4px;font-size:11.5px;color:#f2c24e;letter-spacing:0.29px;font-weight:bold;">NOT STARTED</span>
<div style="left:1792.55px;top:930.4999999999999px;width:2.9px;height:2.9px;background:#1c1c1c;border-radius:50%"></div>
<div style="left:1799.55px;top:930.4999999999999px;width:2.9px;height:2.9px;background:#1c1c1c;border-radius:50%"></div>
<div style="left:1806.55px;top:930.4999999999999px;width:2.9px;height:2.9px;background:#1c1c1c;border-radius:50%"></div>
<svg style="left:1107.5px;top:971.5px" width="18" height="19" viewBox="0 0 18 19" ><g fill="none" stroke="#666" stroke-width="1.25" stroke-linejoin="round"><path d="M1.2 0.6V18.4" stroke-linecap="round"/><path d="M1.2 1.400H8.800V11H1.200"/><path d="M8.800 3.600H16.800V13H8.800"/></g></svg>
<span class="t" style="left:1129.2px;top:974.0px;font-size:12px;color:#707070;letter-spacing:0.64px;">8:00 AM</span>
<svg style="left:1215.4px;top:971.0px" width="18" height="19" viewBox="0 0 18 19" ><g fill="#666"><rect x="1.4" y="0.80" width="3.1" height="2.650"/><rect x="7.6" y="0.80" width="3.1" height="2.650"/><rect x="13.8" y="0.80" width="3.1" height="2.650"/><rect x="4.5" y="3.45" width="3.1" height="2.650"/><rect x="10.7" y="3.45" width="3.1" height="2.650"/><rect x="1.4" y="6.10" width="3.1" height="2.650"/><rect x="7.6" y="6.10" width="3.1" height="2.650"/><rect x="13.8" y="6.10" width="3.1" height="2.650"/><rect x="4.5" y="8.75" width="3.1" height="2.650"/><rect x="10.7" y="8.75" width="3.1" height="2.650"/></g><g fill="none" stroke="#666" stroke-width="1.25"><path d="M1.3 0.4V17.800" stroke-linecap="round"/><rect x="1.4" y="0.800" width="15.500" height="10.600"/></g></svg>
<span class="t" style="left:1236.6px;top:974.0px;font-size:12px;color:#707070;letter-spacing:0.46px;">4:05 PM</span>
<svg style="left:1315.9px;top:971.5px" width="23" height="16" viewBox="0 0 23 16" ><g fill="none" stroke="#666" stroke-width="1.25" stroke-linejoin="round"><path d="M6 1.2H17L22 14.800H1Z"/><path d="M11.500 1.200V4.200M11.500 6.400V9M11.500 11.400V14.800"/></g></svg>
<span class="t" style="left:1344.5px;top:974.0px;font-size:12px;color:#707070;letter-spacing:0.28px;">30.18 km</span>
<svg style="left:1447.5px;top:970.5px" width="14" height="20" viewBox="0 0 14 20" ><g fill="none" stroke="#666" stroke-width="1.25" stroke-linejoin="round"><path d="M7 18.800C3.600 14.200 1 10.600 1 7A6 6 0 0 1 13 7C13 10.600 10.400 14.200 7 18.800Z"/></g><circle cx="7" cy="6.800" r="1.400" fill="#666"/></svg>
<span class="t" style="left:1471.2px;top:974.0px;font-size:12px;color:#707070;letter-spacing:0.08px;">29</span>
<svg style="left:1539.1px;top:971.1px" width="20" height="17" viewBox="0 0 20 17" ><g fill="none" stroke="#666" stroke-width="1.25" stroke-linejoin="round" stroke-linecap="round"><path d="M3 6.400L4.600 1.800C4.800 1.200 5.200 1 5.800 1H14.200C14.800 1 15.200 1.200 15.400 1.800L17 6.400"/><path d="M1.800 6.400H18.200V15.600H15V13.600H5V15.600H1.800Z"/><path d="M0.600 5.600H2.400M17.600 5.600H19.400"/><path d="M4 9.400L6.400 10M16 9.400L13.600 10M8 11.600H12"/></g></svg>
<span class="t" style="left:1566.2px;top:974.0px;font-size:12px;color:#707070;letter-spacing:1.04px;">50min</span>
<svg style="left:1654.5px;top:970.8px" width="16" height="17" viewBox="0 0 17 18" ><g fill="none" stroke="#666" stroke-width="1.350" stroke-linecap="round"><ellipse cx="8.500" cy="6" rx="4.600" ry="5.200"/><path d="M1 17.200C1.400 13.400 3.200 11.400 5.600 10.400"/><path d="M16 17.200C15.600 13.400 13.800 11.400 11.400 10.400"/><path d="M5 12.600C7 14.200 10 14.200 12 12.600"/></g></svg>
<span class="t" style="left:1679.5px;top:974.0px;font-size:12px;color:#707070;letter-spacing:-0.30px;">7h15</span>
<svg style="left:1752.5px;top:970.0px" width="20" height="20" viewBox="0 0 20 20" ><g fill="none" stroke="#666" stroke-width="1.25" stroke-linecap="round" stroke-linejoin="round"><circle cx="10" cy="10" r="9.100"/><path d="M10 5.400V14.400M6.400 11L10 14.600L13.600 11"/></g></svg>
<span class="t" style="left:1780.2px;top:974.0px;font-size:12px;color:#707070;letter-spacing:0.50px;">€72.43</span>

</div></div>
</body></html>
